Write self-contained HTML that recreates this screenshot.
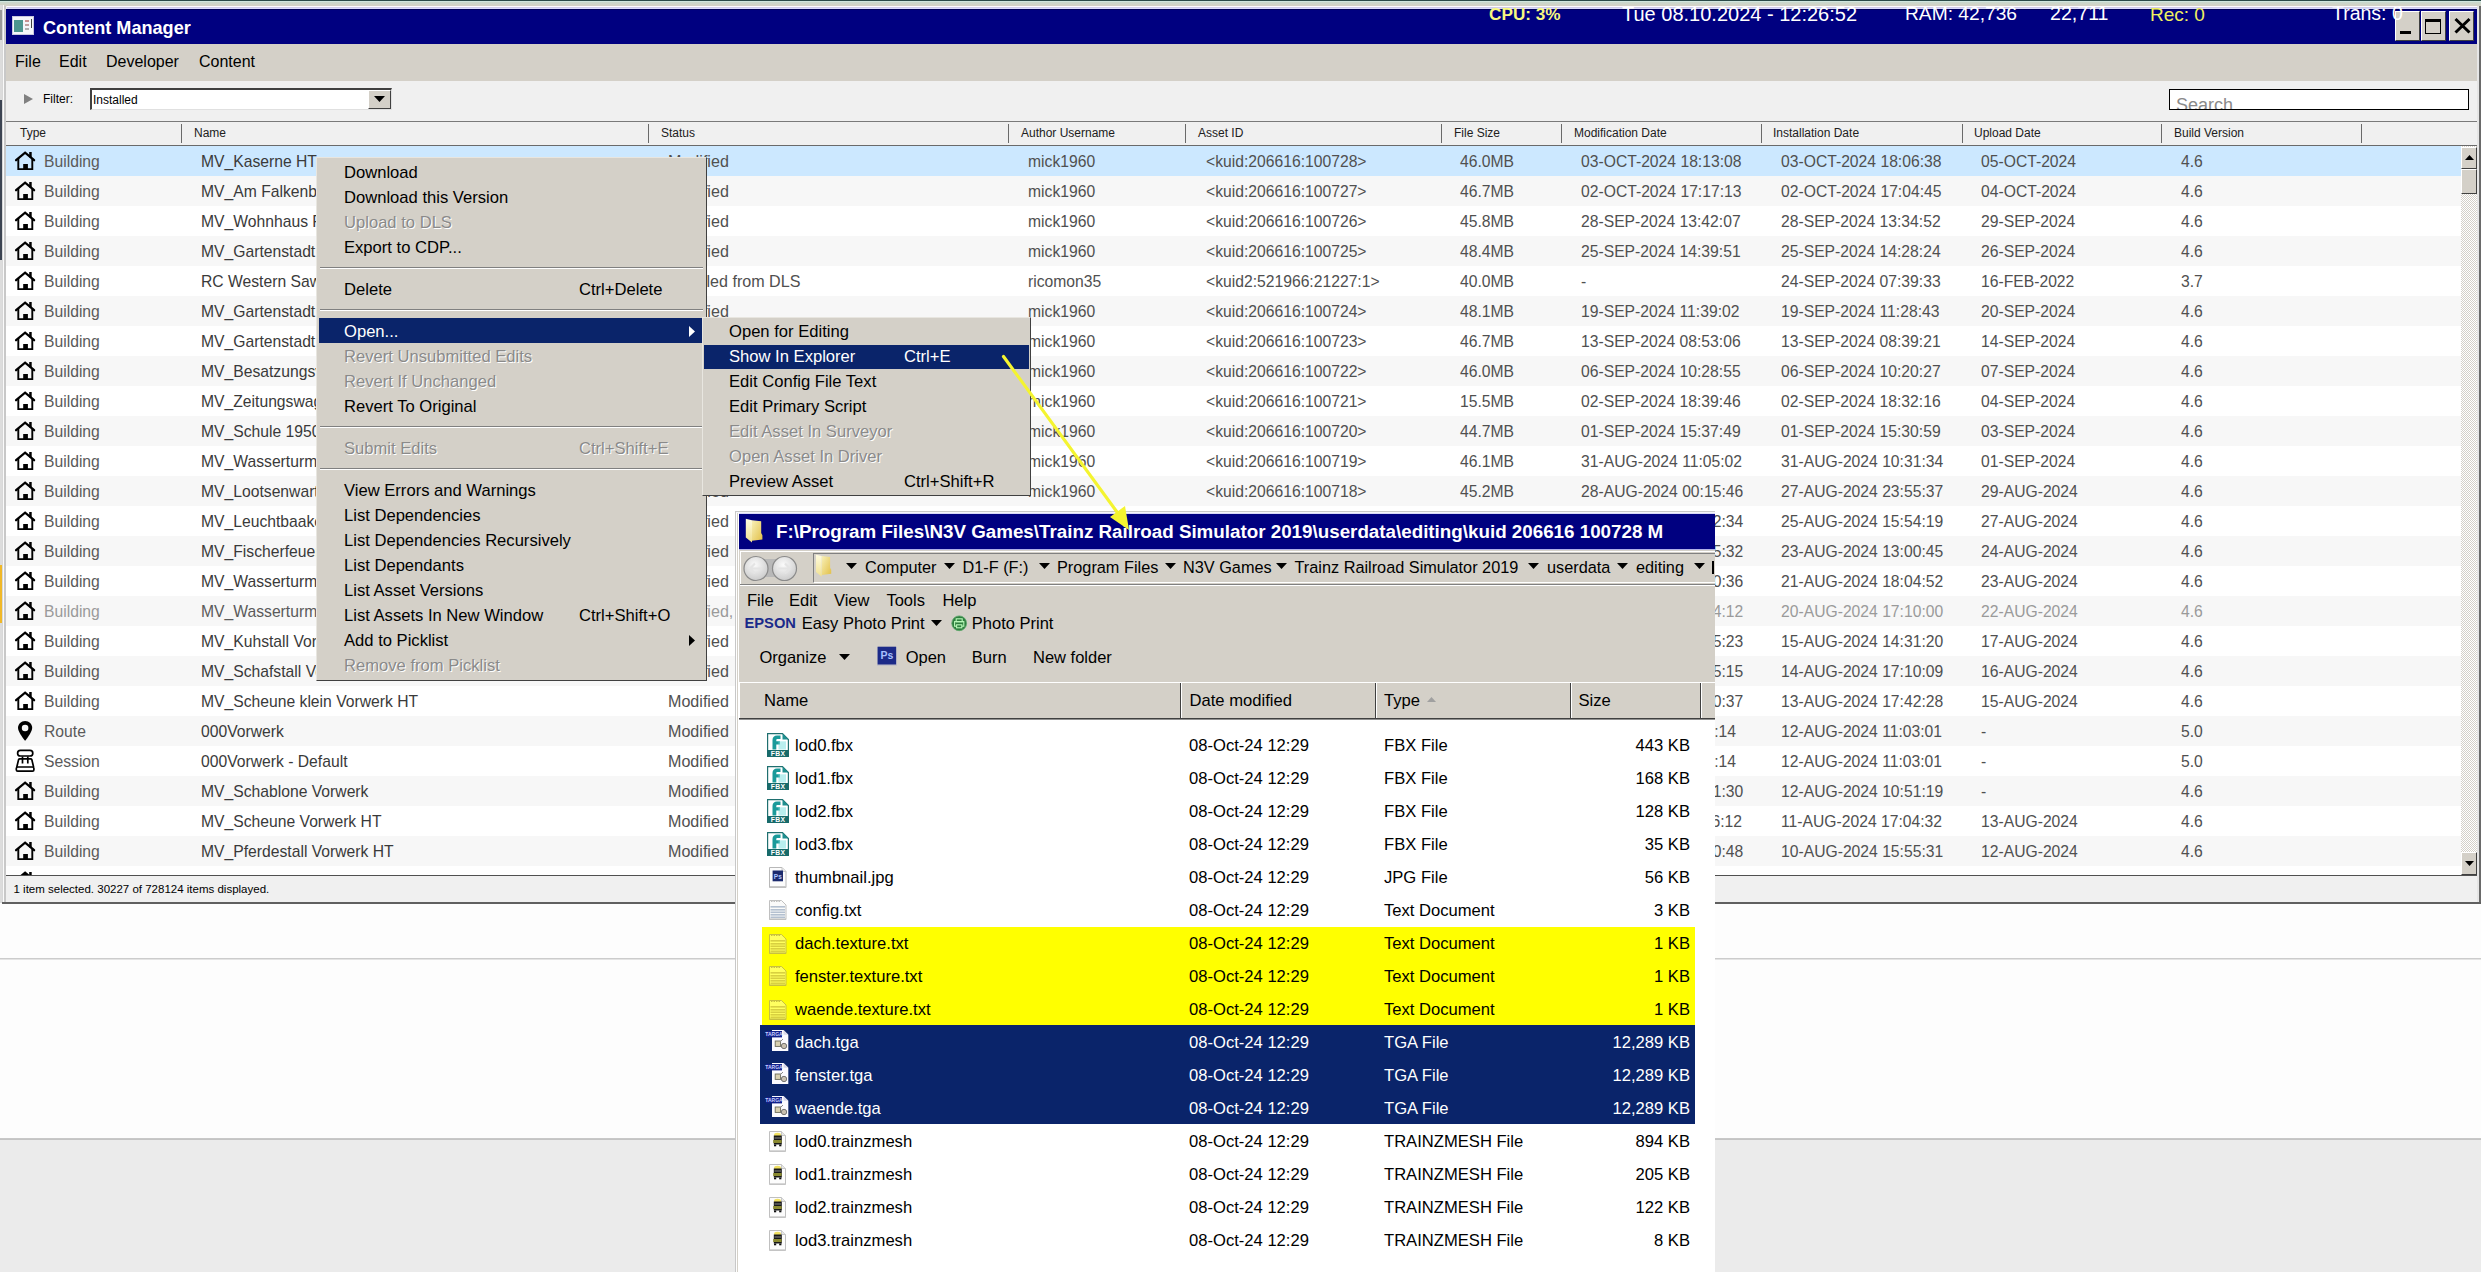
<!DOCTYPE html>
<html><head><meta charset="utf-8"><title>Content Manager</title>
<style>
html,body{margin:0;padding:0;}
body{width:2481px;height:1272px;position:relative;overflow:hidden;background:#fdfdfd;font-family:"Liberation Sans",sans-serif;}
.b{position:absolute;}
.t{position:absolute;white-space:nowrap;}
svg.b{overflow:visible;}
</style></head><body>

<div class="b" style="left:0px;top:0px;width:2481px;height:1px;background:#2a4a48;"></div>
<div class="b" style="left:0px;top:1px;width:2481px;height:1px;background:#d0e6de;"></div>
<div class="b" style="left:0px;top:2px;width:2481px;height:4px;background:linear-gradient(#c8d8cc,#d4d0c4);"></div>
<div class="b" style="left:0px;top:6px;width:2481px;height:1px;background:#fdfbff;"></div>
<div class="b" style="left:6px;top:7px;width:2471px;height:1px;background:#d0cce8;"></div>
<div class="b" style="left:6px;top:8px;width:2471px;height:1px;background:#d8d8ff;"></div>
<div class="b" style="left:0px;top:5px;width:2px;height:898px;background:#dcdcdc;"></div>
<div class="b" style="left:0px;top:10px;width:2px;height:30px;background:#9a9a9a;"></div>
<div class="b" style="left:0px;top:100px;width:2px;height:160px;background:#3c4452;"></div>
<div class="b" style="left:0px;top:565px;width:2px;height:58px;background:#f0b828;"></div>
<div class="b" style="left:2px;top:5px;width:1px;height:898px;background:#d8d8d8;"></div>
<div class="b" style="left:3px;top:5px;width:1px;height:898px;background:#fafafa;"></div>
<div class="b" style="left:4px;top:6px;width:1.5px;height:897px;background:#c8c8c8;"></div>
<div class="b" style="left:5.5px;top:6px;width:0.5px;height:897px;background:#f0f0f0;"></div>
<div class="b" style="left:2477px;top:6px;width:2px;height:897px;background:#e6e6e6;"></div>
<div class="b" style="left:2479px;top:6px;width:2px;height:897px;background:#6a6a6a;"></div>
<div class="b" style="left:6px;top:9px;width:2471px;height:35px;background:#000080;"></div>
<div class="b" style="left:6px;top:9px;width:2471px;height:1px;background:#000058;"></div>
<div class="b" style="left:12px;top:16px;width:22px;height:19px;background:#f4f6fa;border:1px solid #c8c8e0;box-sizing:border-box;"></div>
<div class="b" style="left:14px;top:20px;width:9px;height:12px;background:#4c9690;"></div>
<div class="b" style="left:25px;top:20px;width:4px;height:2px;background:#c89090;"></div>
<div class="b" style="left:25px;top:24px;width:4px;height:2px;background:#c0a0a0;"></div>
<div class="b" style="left:25px;top:28px;width:4px;height:2px;background:#b0b0b0;"></div>
<div class="b" style="left:31px;top:19px;width:1px;height:9px;background:#404040;"></div>
<div class="t" style="left:43.00px;top:18.98px;font-size:18.1px;line-height:18.1px;color:#ffffff;font-weight:700;">Content Manager</div>
<div class="b" style="left:1400px;top:7px;width:1076px;height:30px;overflow:hidden;z-index:5;">
<div class="t" style="left:89px;top:-0.96px;font-size:17.2px;line-height:17.2px;color:#f8f880;font-weight:700;">CPU: 3%</div>
<div class="t" style="left:222px;top:-3.33px;font-size:20px;line-height:20px;color:#ffffff;">Tue 08.10.2024 - 12:26:52</div>
<div class="t" style="left:505px;top:-2.65px;font-size:19.2px;line-height:19.2px;color:#ffffff;">RAM: 42,736</div>
<div class="t" style="left:650px;top:-2.99px;font-size:19.6px;line-height:19.6px;color:#ffffff;">22,711</div>
<div class="t" style="left:750px;top:-2.48px;font-size:19.0px;line-height:19.0px;color:#f0f060;">Rec: 0</div>
<div class="t" style="left:932px;top:-2.91px;font-size:19.5px;line-height:19.5px;color:#ffffff;">Trans: 0</div>
</div>
<div class="b" style="left:2395px;top:11px;width:25px;height:30px;background:#d4d0c8;border-top:1px solid #fff;border-left:1px solid #fff;border-right:1px solid #404040;border-bottom:1px solid #404040;box-sizing:border-box;"></div>
<div class="b" style="left:2421px;top:11px;width:25px;height:30px;background:#d4d0c8;border-top:1px solid #fff;border-left:1px solid #fff;border-right:1px solid #404040;border-bottom:1px solid #404040;box-sizing:border-box;"></div>
<div class="b" style="left:2449px;top:11px;width:25px;height:30px;background:#d4d0c8;border-top:1px solid #fff;border-left:1px solid #fff;border-right:1px solid #404040;border-bottom:1px solid #404040;box-sizing:border-box;"></div>
<div class="b" style="left:2400px;top:31px;width:11px;height:3px;background:#000;"></div>
<div class="b" style="left:2425px;top:19px;width:16px;height:15px;background:transparent;border:1.3px solid #000;border-top-width:3px;box-sizing:border-box;"></div>
<svg class="b" style="left:2453px;top:17px" width="18" height="17" viewBox="0 0 18 17"><path d="M2.5 2L16.5 15.5M16.5 2L2.5 15.5" stroke="#000" stroke-width="3"/></svg>
<div class="b" style="left:6px;top:44px;width:2471px;height:37px;background:#d4d0c8;"></div>
<div class="t" style="left:15.00px;top:54.46px;font-size:16px;line-height:16px;color:#000;">File</div>
<div class="t" style="left:59.00px;top:54.46px;font-size:16px;line-height:16px;color:#000;">Edit</div>
<div class="t" style="left:106.00px;top:54.46px;font-size:16px;line-height:16px;color:#000;">Developer</div>
<div class="t" style="left:199.00px;top:54.46px;font-size:16px;line-height:16px;color:#000;">Content</div>
<div class="b" style="left:6px;top:81px;width:2471px;height:40px;background:#f0f0f0;"></div>
<svg class="b" style="left:24px;top:94px" width="9" height="10" viewBox="0 0 9 10"><path d="M0 0L9 5L0 10Z" fill="#808080"/></svg>
<div class="t" style="left:43.00px;top:93.34px;font-size:12px;line-height:12px;color:#000;">Filter:</div>
<div class="b" style="left:90px;top:88px;width:302px;height:22px;background:#fff;border-top:2px solid #404040;border-left:2px solid #404040;border-bottom:1px solid #e0e0e0;border-right:1px solid #e0e0e0;box-sizing:border-box;"></div>
<div class="t" style="left:93.00px;top:93.84px;font-size:12px;line-height:12px;color:#000;">Installed</div>
<div class="b" style="left:368px;top:90px;width:23px;height:19px;background:#d4d0c8;border-top:1px solid #fff;border-left:1px solid #fff;border-right:1px solid #404040;border-bottom:1px solid #404040;box-sizing:border-box;"></div>
<svg class="b" style="left:374px;top:96px" width="11" height="6" viewBox="0 0 11 6"><path d="M0 0H11L5.5 6Z" fill="#000"/></svg>
<div class="b" style="left:2169px;top:89px;width:300px;height:21px;background:#fff;border:1px solid #000;box-sizing:border-box;"></div>
<div class="b" style="left:2170px;top:90px;width:298px;height:19px;overflow:hidden;"><div class="t" style="left:6px;top:6.4px;font-size:18px;line-height:18px;color:#8a8a8a;">Search</div></div>
<div class="b" style="left:6px;top:121px;width:2471px;height:1px;background:#7a7a7a;"></div>
<div class="b" style="left:6px;top:122px;width:2471px;height:23px;background:#f0f0f0;"></div>
<div class="b" style="left:6px;top:145px;width:2471px;height:1px;background:#6a6a6a;"></div>
<div class="b" style="left:181px;top:124px;width:1px;height:19px;background:#6a6a6a;"></div>
<div class="b" style="left:648px;top:124px;width:1px;height:19px;background:#6a6a6a;"></div>
<div class="b" style="left:1008px;top:124px;width:1px;height:19px;background:#6a6a6a;"></div>
<div class="b" style="left:1185px;top:124px;width:1px;height:19px;background:#6a6a6a;"></div>
<div class="b" style="left:1441px;top:124px;width:1px;height:19px;background:#6a6a6a;"></div>
<div class="b" style="left:1561px;top:124px;width:1px;height:19px;background:#6a6a6a;"></div>
<div class="b" style="left:1761px;top:124px;width:1px;height:19px;background:#6a6a6a;"></div>
<div class="b" style="left:1962px;top:124px;width:1px;height:19px;background:#6a6a6a;"></div>
<div class="b" style="left:2161px;top:124px;width:1px;height:19px;background:#6a6a6a;"></div>
<div class="b" style="left:2361px;top:124px;width:1px;height:19px;background:#6a6a6a;"></div>
<div class="t" style="left:20.00px;top:127.04px;font-size:12.0px;line-height:12.0px;color:#202020;">Type</div>
<div class="t" style="left:194.00px;top:127.04px;font-size:12.0px;line-height:12.0px;color:#202020;">Name</div>
<div class="t" style="left:661.00px;top:127.04px;font-size:12.0px;line-height:12.0px;color:#202020;">Status</div>
<div class="t" style="left:1021.00px;top:127.04px;font-size:12.0px;line-height:12.0px;color:#202020;">Author Username</div>
<div class="t" style="left:1198.00px;top:127.04px;font-size:12.0px;line-height:12.0px;color:#202020;">Asset ID</div>
<div class="t" style="left:1454.00px;top:127.04px;font-size:12.0px;line-height:12.0px;color:#202020;">File Size</div>
<div class="t" style="left:1574.00px;top:127.04px;font-size:12.0px;line-height:12.0px;color:#202020;">Modification Date</div>
<div class="t" style="left:1773.00px;top:127.04px;font-size:12.0px;line-height:12.0px;color:#202020;">Installation Date</div>
<div class="t" style="left:1974.00px;top:127.04px;font-size:12.0px;line-height:12.0px;color:#202020;">Upload Date</div>
<div class="t" style="left:2174.00px;top:127.04px;font-size:12.0px;line-height:12.0px;color:#202020;">Build Version</div>
<div class="b" style="left:6px;top:875px;width:2471px;height:1px;background:#505050;"></div>
<div class="b" style="left:6px;top:876px;width:2471px;height:26px;background:#f0f0f0;"></div>
<div class="b" style="left:2px;top:902px;width:2479px;height:2px;background:#606060;"></div>
<div class="t" style="left:13.50px;top:883.77px;font-size:11.5px;line-height:11.5px;color:#000;">1 item selected. 30227 of 728124 items displayed.</div>
<div class="b" style="left:0px;top:958px;width:2481px;height:1px;background:#cccccc;"></div>
<div class="b" style="left:0px;top:959px;width:2481px;height:1px;background:#e4e4e4;"></div>
<div class="b" style="left:0px;top:1138px;width:2481px;height:1px;background:#c8c8c8;"></div>
<div class="b" style="left:0px;top:1139px;width:2481px;height:1px;background:#c4c4c4;"></div>
<div class="b" style="left:0px;top:1140px;width:2481px;height:132px;background:#ebebeb;"></div>
<div class="b" style="left:6px;top:146px;width:2455px;height:729px;overflow:hidden;">
<div class="b" style="left:0;top:0px;width:2455px;height:30px;background:#cce8ff;"></div>
<svg class="b" style="left:9px;top:0px" width="21" height="26" viewBox="0 0 21 26"><path d="M1.1 14.2L10.1 6.7L19.1 14.2" fill="none" stroke="#000" stroke-width="2.3" stroke-linecap="round" stroke-linejoin="miter"/><path d="M3.3 12.3V23.1H17.3V12.3" fill="none" stroke="#000" stroke-width="1.9"/><rect x="8.2" y="18" width="4.7" height="5.5" fill="#000"/><rect x="14.2" y="6" width="2.5" height="5.5" fill="#000"/></svg>
<div class="t" style="left:38.00px;top:7.51px;font-size:15.7px;line-height:15.7px;color:#5a5a5a;">Building</div>
<div class="t" style="left:195.00px;top:7.51px;font-size:15.7px;line-height:15.7px;color:#3a3a3a;">MV_Kaserne HT</div>
<div class="t" style="left:662.00px;top:7.17px;font-size:16.1px;line-height:16.1px;color:#505050;">Modified</div>
<div class="t" style="left:1022.00px;top:7.51px;font-size:15.7px;line-height:15.7px;color:#505050;">mick1960</div>
<div class="t" style="left:1200.00px;top:7.51px;font-size:15.7px;line-height:15.7px;color:#505050;">&lt;kuid:206616:100728&gt;</div>
<div class="t" style="left:1454.00px;top:7.51px;font-size:15.7px;line-height:15.7px;color:#505050;">46.0MB</div>
<div class="t" style="left:1575.00px;top:7.51px;font-size:15.7px;line-height:15.7px;color:#505050;">03-OCT-2024 18:13:08</div>
<div class="t" style="left:1775.00px;top:7.51px;font-size:15.7px;line-height:15.7px;color:#505050;">03-OCT-2024 18:06:38</div>
<div class="t" style="left:1975.00px;top:7.51px;font-size:15.7px;line-height:15.7px;color:#505050;">05-OCT-2024</div>
<div class="t" style="left:2175.00px;top:7.51px;font-size:15.7px;line-height:15.7px;color:#505050;">4.6</div>
<div class="b" style="left:0;top:30px;width:2455px;height:30px;background:#f7f7f7;"></div>
<svg class="b" style="left:9px;top:30px" width="21" height="26" viewBox="0 0 21 26"><path d="M1.1 14.2L10.1 6.7L19.1 14.2" fill="none" stroke="#000" stroke-width="2.3" stroke-linecap="round" stroke-linejoin="miter"/><path d="M3.3 12.3V23.1H17.3V12.3" fill="none" stroke="#000" stroke-width="1.9"/><rect x="8.2" y="18" width="4.7" height="5.5" fill="#000"/><rect x="14.2" y="6" width="2.5" height="5.5" fill="#000"/></svg>
<div class="t" style="left:38.00px;top:37.51px;font-size:15.7px;line-height:15.7px;color:#5a5a5a;">Building</div>
<div class="t" style="left:195.00px;top:37.51px;font-size:15.7px;line-height:15.7px;color:#3a3a3a;">MV_Am Falkenberg HT</div>
<div class="t" style="left:662.00px;top:37.17px;font-size:16.1px;line-height:16.1px;color:#505050;">Modified</div>
<div class="t" style="left:1022.00px;top:37.51px;font-size:15.7px;line-height:15.7px;color:#505050;">mick1960</div>
<div class="t" style="left:1200.00px;top:37.51px;font-size:15.7px;line-height:15.7px;color:#505050;">&lt;kuid:206616:100727&gt;</div>
<div class="t" style="left:1454.00px;top:37.51px;font-size:15.7px;line-height:15.7px;color:#505050;">46.7MB</div>
<div class="t" style="left:1575.00px;top:37.51px;font-size:15.7px;line-height:15.7px;color:#505050;">02-OCT-2024 17:17:13</div>
<div class="t" style="left:1775.00px;top:37.51px;font-size:15.7px;line-height:15.7px;color:#505050;">02-OCT-2024 17:04:45</div>
<div class="t" style="left:1975.00px;top:37.51px;font-size:15.7px;line-height:15.7px;color:#505050;">04-OCT-2024</div>
<div class="t" style="left:2175.00px;top:37.51px;font-size:15.7px;line-height:15.7px;color:#505050;">4.6</div>
<div class="b" style="left:0;top:60px;width:2455px;height:30px;background:#ffffff;"></div>
<svg class="b" style="left:9px;top:60px" width="21" height="26" viewBox="0 0 21 26"><path d="M1.1 14.2L10.1 6.7L19.1 14.2" fill="none" stroke="#000" stroke-width="2.3" stroke-linecap="round" stroke-linejoin="miter"/><path d="M3.3 12.3V23.1H17.3V12.3" fill="none" stroke="#000" stroke-width="1.9"/><rect x="8.2" y="18" width="4.7" height="5.5" fill="#000"/><rect x="14.2" y="6" width="2.5" height="5.5" fill="#000"/></svg>
<div class="t" style="left:38.00px;top:67.51px;font-size:15.7px;line-height:15.7px;color:#5a5a5a;">Building</div>
<div class="t" style="left:195.00px;top:67.51px;font-size:15.7px;line-height:15.7px;color:#3a3a3a;">MV_Wohnhaus Falkenberg</div>
<div class="t" style="left:662.00px;top:67.17px;font-size:16.1px;line-height:16.1px;color:#505050;">Modified</div>
<div class="t" style="left:1022.00px;top:67.51px;font-size:15.7px;line-height:15.7px;color:#505050;">mick1960</div>
<div class="t" style="left:1200.00px;top:67.51px;font-size:15.7px;line-height:15.7px;color:#505050;">&lt;kuid:206616:100726&gt;</div>
<div class="t" style="left:1454.00px;top:67.51px;font-size:15.7px;line-height:15.7px;color:#505050;">45.8MB</div>
<div class="t" style="left:1575.00px;top:67.51px;font-size:15.7px;line-height:15.7px;color:#505050;">28-SEP-2024 13:42:07</div>
<div class="t" style="left:1775.00px;top:67.51px;font-size:15.7px;line-height:15.7px;color:#505050;">28-SEP-2024 13:34:52</div>
<div class="t" style="left:1975.00px;top:67.51px;font-size:15.7px;line-height:15.7px;color:#505050;">29-SEP-2024</div>
<div class="t" style="left:2175.00px;top:67.51px;font-size:15.7px;line-height:15.7px;color:#505050;">4.6</div>
<div class="b" style="left:0;top:90px;width:2455px;height:30px;background:#f7f7f7;"></div>
<svg class="b" style="left:9px;top:90px" width="21" height="26" viewBox="0 0 21 26"><path d="M1.1 14.2L10.1 6.7L19.1 14.2" fill="none" stroke="#000" stroke-width="2.3" stroke-linecap="round" stroke-linejoin="miter"/><path d="M3.3 12.3V23.1H17.3V12.3" fill="none" stroke="#000" stroke-width="1.9"/><rect x="8.2" y="18" width="4.7" height="5.5" fill="#000"/><rect x="14.2" y="6" width="2.5" height="5.5" fill="#000"/></svg>
<div class="t" style="left:38.00px;top:97.51px;font-size:15.7px;line-height:15.7px;color:#5a5a5a;">Building</div>
<div class="t" style="left:195.00px;top:97.51px;font-size:15.7px;line-height:15.7px;color:#3a3a3a;">MV_Gartenstadt 1</div>
<div class="t" style="left:662.00px;top:97.17px;font-size:16.1px;line-height:16.1px;color:#505050;">Modified</div>
<div class="t" style="left:1022.00px;top:97.51px;font-size:15.7px;line-height:15.7px;color:#505050;">mick1960</div>
<div class="t" style="left:1200.00px;top:97.51px;font-size:15.7px;line-height:15.7px;color:#505050;">&lt;kuid:206616:100725&gt;</div>
<div class="t" style="left:1454.00px;top:97.51px;font-size:15.7px;line-height:15.7px;color:#505050;">48.4MB</div>
<div class="t" style="left:1575.00px;top:97.51px;font-size:15.7px;line-height:15.7px;color:#505050;">25-SEP-2024 14:39:51</div>
<div class="t" style="left:1775.00px;top:97.51px;font-size:15.7px;line-height:15.7px;color:#505050;">25-SEP-2024 14:28:24</div>
<div class="t" style="left:1975.00px;top:97.51px;font-size:15.7px;line-height:15.7px;color:#505050;">26-SEP-2024</div>
<div class="t" style="left:2175.00px;top:97.51px;font-size:15.7px;line-height:15.7px;color:#505050;">4.6</div>
<div class="b" style="left:0;top:120px;width:2455px;height:30px;background:#ffffff;"></div>
<svg class="b" style="left:9px;top:120px" width="21" height="26" viewBox="0 0 21 26"><path d="M1.1 14.2L10.1 6.7L19.1 14.2" fill="none" stroke="#000" stroke-width="2.3" stroke-linecap="round" stroke-linejoin="miter"/><path d="M3.3 12.3V23.1H17.3V12.3" fill="none" stroke="#000" stroke-width="1.9"/><rect x="8.2" y="18" width="4.7" height="5.5" fill="#000"/><rect x="14.2" y="6" width="2.5" height="5.5" fill="#000"/></svg>
<div class="t" style="left:38.00px;top:127.51px;font-size:15.7px;line-height:15.7px;color:#5a5a5a;">Building</div>
<div class="t" style="left:195.00px;top:127.51px;font-size:15.7px;line-height:15.7px;color:#3a3a3a;">RC Western Sawmill</div>
<div class="t" style="left:662.00px;top:127.17px;font-size:16.1px;line-height:16.1px;color:#505050;">Installed from DLS</div>
<div class="t" style="left:1022.00px;top:127.51px;font-size:15.7px;line-height:15.7px;color:#505050;">ricomon35</div>
<div class="t" style="left:1200.00px;top:127.51px;font-size:15.7px;line-height:15.7px;color:#505050;">&lt;kuid2:521966:21227:1&gt;</div>
<div class="t" style="left:1454.00px;top:127.51px;font-size:15.7px;line-height:15.7px;color:#505050;">40.0MB</div>
<div class="t" style="left:1575.00px;top:127.51px;font-size:15.7px;line-height:15.7px;color:#505050;">-</div>
<div class="t" style="left:1775.00px;top:127.51px;font-size:15.7px;line-height:15.7px;color:#505050;">24-SEP-2024 07:39:33</div>
<div class="t" style="left:1975.00px;top:127.51px;font-size:15.7px;line-height:15.7px;color:#505050;">16-FEB-2022</div>
<div class="t" style="left:2175.00px;top:127.51px;font-size:15.7px;line-height:15.7px;color:#505050;">3.7</div>
<div class="b" style="left:0;top:150px;width:2455px;height:30px;background:#f7f7f7;"></div>
<svg class="b" style="left:9px;top:150px" width="21" height="26" viewBox="0 0 21 26"><path d="M1.1 14.2L10.1 6.7L19.1 14.2" fill="none" stroke="#000" stroke-width="2.3" stroke-linecap="round" stroke-linejoin="miter"/><path d="M3.3 12.3V23.1H17.3V12.3" fill="none" stroke="#000" stroke-width="1.9"/><rect x="8.2" y="18" width="4.7" height="5.5" fill="#000"/><rect x="14.2" y="6" width="2.5" height="5.5" fill="#000"/></svg>
<div class="t" style="left:38.00px;top:157.51px;font-size:15.7px;line-height:15.7px;color:#5a5a5a;">Building</div>
<div class="t" style="left:195.00px;top:157.51px;font-size:15.7px;line-height:15.7px;color:#3a3a3a;">MV_Gartenstadt 2</div>
<div class="t" style="left:662.00px;top:157.17px;font-size:16.1px;line-height:16.1px;color:#505050;">Modified</div>
<div class="t" style="left:1022.00px;top:157.51px;font-size:15.7px;line-height:15.7px;color:#505050;">mick1960</div>
<div class="t" style="left:1200.00px;top:157.51px;font-size:15.7px;line-height:15.7px;color:#505050;">&lt;kuid:206616:100724&gt;</div>
<div class="t" style="left:1454.00px;top:157.51px;font-size:15.7px;line-height:15.7px;color:#505050;">48.1MB</div>
<div class="t" style="left:1575.00px;top:157.51px;font-size:15.7px;line-height:15.7px;color:#505050;">19-SEP-2024 11:39:02</div>
<div class="t" style="left:1775.00px;top:157.51px;font-size:15.7px;line-height:15.7px;color:#505050;">19-SEP-2024 11:28:43</div>
<div class="t" style="left:1975.00px;top:157.51px;font-size:15.7px;line-height:15.7px;color:#505050;">20-SEP-2024</div>
<div class="t" style="left:2175.00px;top:157.51px;font-size:15.7px;line-height:15.7px;color:#505050;">4.6</div>
<div class="b" style="left:0;top:180px;width:2455px;height:30px;background:#ffffff;"></div>
<svg class="b" style="left:9px;top:180px" width="21" height="26" viewBox="0 0 21 26"><path d="M1.1 14.2L10.1 6.7L19.1 14.2" fill="none" stroke="#000" stroke-width="2.3" stroke-linecap="round" stroke-linejoin="miter"/><path d="M3.3 12.3V23.1H17.3V12.3" fill="none" stroke="#000" stroke-width="1.9"/><rect x="8.2" y="18" width="4.7" height="5.5" fill="#000"/><rect x="14.2" y="6" width="2.5" height="5.5" fill="#000"/></svg>
<div class="t" style="left:38.00px;top:187.51px;font-size:15.7px;line-height:15.7px;color:#5a5a5a;">Building</div>
<div class="t" style="left:195.00px;top:187.51px;font-size:15.7px;line-height:15.7px;color:#3a3a3a;">MV_Gartenstadt 3</div>
<div class="t" style="left:662.00px;top:187.17px;font-size:16.1px;line-height:16.1px;color:#505050;">Modified</div>
<div class="t" style="left:1022.00px;top:187.51px;font-size:15.7px;line-height:15.7px;color:#505050;">mick1960</div>
<div class="t" style="left:1200.00px;top:187.51px;font-size:15.7px;line-height:15.7px;color:#505050;">&lt;kuid:206616:100723&gt;</div>
<div class="t" style="left:1454.00px;top:187.51px;font-size:15.7px;line-height:15.7px;color:#505050;">46.7MB</div>
<div class="t" style="left:1575.00px;top:187.51px;font-size:15.7px;line-height:15.7px;color:#505050;">13-SEP-2024 08:53:06</div>
<div class="t" style="left:1775.00px;top:187.51px;font-size:15.7px;line-height:15.7px;color:#505050;">13-SEP-2024 08:39:21</div>
<div class="t" style="left:1975.00px;top:187.51px;font-size:15.7px;line-height:15.7px;color:#505050;">14-SEP-2024</div>
<div class="t" style="left:2175.00px;top:187.51px;font-size:15.7px;line-height:15.7px;color:#505050;">4.6</div>
<div class="b" style="left:0;top:210px;width:2455px;height:30px;background:#f7f7f7;"></div>
<svg class="b" style="left:9px;top:210px" width="21" height="26" viewBox="0 0 21 26"><path d="M1.1 14.2L10.1 6.7L19.1 14.2" fill="none" stroke="#000" stroke-width="2.3" stroke-linecap="round" stroke-linejoin="miter"/><path d="M3.3 12.3V23.1H17.3V12.3" fill="none" stroke="#000" stroke-width="1.9"/><rect x="8.2" y="18" width="4.7" height="5.5" fill="#000"/><rect x="14.2" y="6" width="2.5" height="5.5" fill="#000"/></svg>
<div class="t" style="left:38.00px;top:217.51px;font-size:15.7px;line-height:15.7px;color:#5a5a5a;">Building</div>
<div class="t" style="left:195.00px;top:217.51px;font-size:15.7px;line-height:15.7px;color:#3a3a3a;">MV_Besatzungsvilla</div>
<div class="t" style="left:662.00px;top:217.17px;font-size:16.1px;line-height:16.1px;color:#505050;">Modified</div>
<div class="t" style="left:1022.00px;top:217.51px;font-size:15.7px;line-height:15.7px;color:#505050;">mick1960</div>
<div class="t" style="left:1200.00px;top:217.51px;font-size:15.7px;line-height:15.7px;color:#505050;">&lt;kuid:206616:100722&gt;</div>
<div class="t" style="left:1454.00px;top:217.51px;font-size:15.7px;line-height:15.7px;color:#505050;">46.0MB</div>
<div class="t" style="left:1575.00px;top:217.51px;font-size:15.7px;line-height:15.7px;color:#505050;">06-SEP-2024 10:28:55</div>
<div class="t" style="left:1775.00px;top:217.51px;font-size:15.7px;line-height:15.7px;color:#505050;">06-SEP-2024 10:20:27</div>
<div class="t" style="left:1975.00px;top:217.51px;font-size:15.7px;line-height:15.7px;color:#505050;">07-SEP-2024</div>
<div class="t" style="left:2175.00px;top:217.51px;font-size:15.7px;line-height:15.7px;color:#505050;">4.6</div>
<div class="b" style="left:0;top:240px;width:2455px;height:30px;background:#ffffff;"></div>
<svg class="b" style="left:9px;top:240px" width="21" height="26" viewBox="0 0 21 26"><path d="M1.1 14.2L10.1 6.7L19.1 14.2" fill="none" stroke="#000" stroke-width="2.3" stroke-linecap="round" stroke-linejoin="miter"/><path d="M3.3 12.3V23.1H17.3V12.3" fill="none" stroke="#000" stroke-width="1.9"/><rect x="8.2" y="18" width="4.7" height="5.5" fill="#000"/><rect x="14.2" y="6" width="2.5" height="5.5" fill="#000"/></svg>
<div class="t" style="left:38.00px;top:247.51px;font-size:15.7px;line-height:15.7px;color:#5a5a5a;">Building</div>
<div class="t" style="left:195.00px;top:247.51px;font-size:15.7px;line-height:15.7px;color:#3a3a3a;">MV_Zeitungswagen</div>
<div class="t" style="left:662.00px;top:247.17px;font-size:16.1px;line-height:16.1px;color:#505050;">Modified</div>
<div class="t" style="left:1022.00px;top:247.51px;font-size:15.7px;line-height:15.7px;color:#505050;">mick1960</div>
<div class="t" style="left:1200.00px;top:247.51px;font-size:15.7px;line-height:15.7px;color:#505050;">&lt;kuid:206616:100721&gt;</div>
<div class="t" style="left:1454.00px;top:247.51px;font-size:15.7px;line-height:15.7px;color:#505050;">15.5MB</div>
<div class="t" style="left:1575.00px;top:247.51px;font-size:15.7px;line-height:15.7px;color:#505050;">02-SEP-2024 18:39:46</div>
<div class="t" style="left:1775.00px;top:247.51px;font-size:15.7px;line-height:15.7px;color:#505050;">02-SEP-2024 18:32:16</div>
<div class="t" style="left:1975.00px;top:247.51px;font-size:15.7px;line-height:15.7px;color:#505050;">04-SEP-2024</div>
<div class="t" style="left:2175.00px;top:247.51px;font-size:15.7px;line-height:15.7px;color:#505050;">4.6</div>
<div class="b" style="left:0;top:270px;width:2455px;height:30px;background:#f7f7f7;"></div>
<svg class="b" style="left:9px;top:270px" width="21" height="26" viewBox="0 0 21 26"><path d="M1.1 14.2L10.1 6.7L19.1 14.2" fill="none" stroke="#000" stroke-width="2.3" stroke-linecap="round" stroke-linejoin="miter"/><path d="M3.3 12.3V23.1H17.3V12.3" fill="none" stroke="#000" stroke-width="1.9"/><rect x="8.2" y="18" width="4.7" height="5.5" fill="#000"/><rect x="14.2" y="6" width="2.5" height="5.5" fill="#000"/></svg>
<div class="t" style="left:38.00px;top:277.51px;font-size:15.7px;line-height:15.7px;color:#5a5a5a;">Building</div>
<div class="t" style="left:195.00px;top:277.51px;font-size:15.7px;line-height:15.7px;color:#3a3a3a;">MV_Schule 1950</div>
<div class="t" style="left:662.00px;top:277.17px;font-size:16.1px;line-height:16.1px;color:#505050;">Modified</div>
<div class="t" style="left:1022.00px;top:277.51px;font-size:15.7px;line-height:15.7px;color:#505050;">mick1960</div>
<div class="t" style="left:1200.00px;top:277.51px;font-size:15.7px;line-height:15.7px;color:#505050;">&lt;kuid:206616:100720&gt;</div>
<div class="t" style="left:1454.00px;top:277.51px;font-size:15.7px;line-height:15.7px;color:#505050;">44.7MB</div>
<div class="t" style="left:1575.00px;top:277.51px;font-size:15.7px;line-height:15.7px;color:#505050;">01-SEP-2024 15:37:49</div>
<div class="t" style="left:1775.00px;top:277.51px;font-size:15.7px;line-height:15.7px;color:#505050;">01-SEP-2024 15:30:59</div>
<div class="t" style="left:1975.00px;top:277.51px;font-size:15.7px;line-height:15.7px;color:#505050;">03-SEP-2024</div>
<div class="t" style="left:2175.00px;top:277.51px;font-size:15.7px;line-height:15.7px;color:#505050;">4.6</div>
<div class="b" style="left:0;top:300px;width:2455px;height:30px;background:#ffffff;"></div>
<svg class="b" style="left:9px;top:300px" width="21" height="26" viewBox="0 0 21 26"><path d="M1.1 14.2L10.1 6.7L19.1 14.2" fill="none" stroke="#000" stroke-width="2.3" stroke-linecap="round" stroke-linejoin="miter"/><path d="M3.3 12.3V23.1H17.3V12.3" fill="none" stroke="#000" stroke-width="1.9"/><rect x="8.2" y="18" width="4.7" height="5.5" fill="#000"/><rect x="14.2" y="6" width="2.5" height="5.5" fill="#000"/></svg>
<div class="t" style="left:38.00px;top:307.51px;font-size:15.7px;line-height:15.7px;color:#5a5a5a;">Building</div>
<div class="t" style="left:195.00px;top:307.51px;font-size:15.7px;line-height:15.7px;color:#3a3a3a;">MV_Wasserturm 1</div>
<div class="t" style="left:662.00px;top:307.17px;font-size:16.1px;line-height:16.1px;color:#505050;">Modified</div>
<div class="t" style="left:1022.00px;top:307.51px;font-size:15.7px;line-height:15.7px;color:#505050;">mick1960</div>
<div class="t" style="left:1200.00px;top:307.51px;font-size:15.7px;line-height:15.7px;color:#505050;">&lt;kuid:206616:100719&gt;</div>
<div class="t" style="left:1454.00px;top:307.51px;font-size:15.7px;line-height:15.7px;color:#505050;">46.1MB</div>
<div class="t" style="left:1575.00px;top:307.51px;font-size:15.7px;line-height:15.7px;color:#505050;">31-AUG-2024 11:05:02</div>
<div class="t" style="left:1775.00px;top:307.51px;font-size:15.7px;line-height:15.7px;color:#505050;">31-AUG-2024 10:31:34</div>
<div class="t" style="left:1975.00px;top:307.51px;font-size:15.7px;line-height:15.7px;color:#505050;">01-SEP-2024</div>
<div class="t" style="left:2175.00px;top:307.51px;font-size:15.7px;line-height:15.7px;color:#505050;">4.6</div>
<div class="b" style="left:0;top:330px;width:2455px;height:30px;background:#f7f7f7;"></div>
<svg class="b" style="left:9px;top:330px" width="21" height="26" viewBox="0 0 21 26"><path d="M1.1 14.2L10.1 6.7L19.1 14.2" fill="none" stroke="#000" stroke-width="2.3" stroke-linecap="round" stroke-linejoin="miter"/><path d="M3.3 12.3V23.1H17.3V12.3" fill="none" stroke="#000" stroke-width="1.9"/><rect x="8.2" y="18" width="4.7" height="5.5" fill="#000"/><rect x="14.2" y="6" width="2.5" height="5.5" fill="#000"/></svg>
<div class="t" style="left:38.00px;top:337.51px;font-size:15.7px;line-height:15.7px;color:#5a5a5a;">Building</div>
<div class="t" style="left:195.00px;top:337.51px;font-size:15.7px;line-height:15.7px;color:#3a3a3a;">MV_Lootsenwart</div>
<div class="t" style="left:662.00px;top:337.17px;font-size:16.1px;line-height:16.1px;color:#505050;">Modified</div>
<div class="t" style="left:1022.00px;top:337.51px;font-size:15.7px;line-height:15.7px;color:#505050;">mick1960</div>
<div class="t" style="left:1200.00px;top:337.51px;font-size:15.7px;line-height:15.7px;color:#505050;">&lt;kuid:206616:100718&gt;</div>
<div class="t" style="left:1454.00px;top:337.51px;font-size:15.7px;line-height:15.7px;color:#505050;">45.2MB</div>
<div class="t" style="left:1575.00px;top:337.51px;font-size:15.7px;line-height:15.7px;color:#505050;">28-AUG-2024 00:15:46</div>
<div class="t" style="left:1775.00px;top:337.51px;font-size:15.7px;line-height:15.7px;color:#505050;">27-AUG-2024 23:55:37</div>
<div class="t" style="left:1975.00px;top:337.51px;font-size:15.7px;line-height:15.7px;color:#505050;">29-AUG-2024</div>
<div class="t" style="left:2175.00px;top:337.51px;font-size:15.7px;line-height:15.7px;color:#505050;">4.6</div>
<div class="b" style="left:0;top:360px;width:2455px;height:30px;background:#ffffff;"></div>
<svg class="b" style="left:9px;top:360px" width="21" height="26" viewBox="0 0 21 26"><path d="M1.1 14.2L10.1 6.7L19.1 14.2" fill="none" stroke="#000" stroke-width="2.3" stroke-linecap="round" stroke-linejoin="miter"/><path d="M3.3 12.3V23.1H17.3V12.3" fill="none" stroke="#000" stroke-width="1.9"/><rect x="8.2" y="18" width="4.7" height="5.5" fill="#000"/><rect x="14.2" y="6" width="2.5" height="5.5" fill="#000"/></svg>
<div class="t" style="left:38.00px;top:367.51px;font-size:15.7px;line-height:15.7px;color:#5a5a5a;">Building</div>
<div class="t" style="left:195.00px;top:367.51px;font-size:15.7px;line-height:15.7px;color:#3a3a3a;">MV_Leuchtbaake</div>
<div class="t" style="left:662.00px;top:367.17px;font-size:16.1px;line-height:16.1px;color:#505050;">Modified</div>
<div class="t" style="left:1022.00px;top:367.51px;font-size:15.7px;line-height:15.7px;color:#505050;">mick1960</div>
<div class="t" style="left:1200.00px;top:367.51px;font-size:15.7px;line-height:15.7px;color:#505050;">&lt;kuid:206616:100717&gt;</div>
<div class="t" style="left:1454.00px;top:367.51px;font-size:15.7px;line-height:15.7px;color:#505050;">44.1MB</div>
<div class="t" style="left:1575.00px;top:367.51px;font-size:15.7px;line-height:15.7px;color:#505050;">25-AUG-2024 16:02:34</div>
<div class="t" style="left:1775.00px;top:367.51px;font-size:15.7px;line-height:15.7px;color:#505050;">25-AUG-2024 15:54:19</div>
<div class="t" style="left:1975.00px;top:367.51px;font-size:15.7px;line-height:15.7px;color:#505050;">27-AUG-2024</div>
<div class="t" style="left:2175.00px;top:367.51px;font-size:15.7px;line-height:15.7px;color:#505050;">4.6</div>
<div class="b" style="left:0;top:390px;width:2455px;height:30px;background:#f7f7f7;"></div>
<svg class="b" style="left:9px;top:390px" width="21" height="26" viewBox="0 0 21 26"><path d="M1.1 14.2L10.1 6.7L19.1 14.2" fill="none" stroke="#000" stroke-width="2.3" stroke-linecap="round" stroke-linejoin="miter"/><path d="M3.3 12.3V23.1H17.3V12.3" fill="none" stroke="#000" stroke-width="1.9"/><rect x="8.2" y="18" width="4.7" height="5.5" fill="#000"/><rect x="14.2" y="6" width="2.5" height="5.5" fill="#000"/></svg>
<div class="t" style="left:38.00px;top:397.51px;font-size:15.7px;line-height:15.7px;color:#5a5a5a;">Building</div>
<div class="t" style="left:195.00px;top:397.51px;font-size:15.7px;line-height:15.7px;color:#3a3a3a;">MV_Fischerfeuer</div>
<div class="t" style="left:662.00px;top:397.17px;font-size:16.1px;line-height:16.1px;color:#505050;">Modified</div>
<div class="t" style="left:1022.00px;top:397.51px;font-size:15.7px;line-height:15.7px;color:#505050;">mick1960</div>
<div class="t" style="left:1200.00px;top:397.51px;font-size:15.7px;line-height:15.7px;color:#505050;">&lt;kuid:206616:100716&gt;</div>
<div class="t" style="left:1454.00px;top:397.51px;font-size:15.7px;line-height:15.7px;color:#505050;">44.2MB</div>
<div class="t" style="left:1575.00px;top:397.51px;font-size:15.7px;line-height:15.7px;color:#505050;">23-AUG-2024 13:15:32</div>
<div class="t" style="left:1775.00px;top:397.51px;font-size:15.7px;line-height:15.7px;color:#505050;">23-AUG-2024 13:00:45</div>
<div class="t" style="left:1975.00px;top:397.51px;font-size:15.7px;line-height:15.7px;color:#505050;">24-AUG-2024</div>
<div class="t" style="left:2175.00px;top:397.51px;font-size:15.7px;line-height:15.7px;color:#505050;">4.6</div>
<div class="b" style="left:0;top:420px;width:2455px;height:30px;background:#ffffff;"></div>
<svg class="b" style="left:9px;top:420px" width="21" height="26" viewBox="0 0 21 26"><path d="M1.1 14.2L10.1 6.7L19.1 14.2" fill="none" stroke="#000" stroke-width="2.3" stroke-linecap="round" stroke-linejoin="miter"/><path d="M3.3 12.3V23.1H17.3V12.3" fill="none" stroke="#000" stroke-width="1.9"/><rect x="8.2" y="18" width="4.7" height="5.5" fill="#000"/><rect x="14.2" y="6" width="2.5" height="5.5" fill="#000"/></svg>
<div class="t" style="left:38.00px;top:427.51px;font-size:15.7px;line-height:15.7px;color:#5a5a5a;">Building</div>
<div class="t" style="left:195.00px;top:427.51px;font-size:15.7px;line-height:15.7px;color:#3a3a3a;">MV_Wasserturm 2</div>
<div class="t" style="left:662.00px;top:427.17px;font-size:16.1px;line-height:16.1px;color:#505050;">Modified</div>
<div class="t" style="left:1022.00px;top:427.51px;font-size:15.7px;line-height:15.7px;color:#505050;">mick1960</div>
<div class="t" style="left:1200.00px;top:427.51px;font-size:15.7px;line-height:15.7px;color:#505050;">&lt;kuid:206616:100715&gt;</div>
<div class="t" style="left:1454.00px;top:427.51px;font-size:15.7px;line-height:15.7px;color:#505050;">44.3MB</div>
<div class="t" style="left:1575.00px;top:427.51px;font-size:15.7px;line-height:15.7px;color:#505050;">21-AUG-2024 18:10:36</div>
<div class="t" style="left:1775.00px;top:427.51px;font-size:15.7px;line-height:15.7px;color:#505050;">21-AUG-2024 18:04:52</div>
<div class="t" style="left:1975.00px;top:427.51px;font-size:15.7px;line-height:15.7px;color:#505050;">23-AUG-2024</div>
<div class="t" style="left:2175.00px;top:427.51px;font-size:15.7px;line-height:15.7px;color:#505050;">4.6</div>
<div class="b" style="left:0;top:450px;width:2455px;height:30px;background:#f7f7f7;"></div>
<svg class="b" style="left:9px;top:450px" width="21" height="26" viewBox="0 0 21 26"><path d="M1.1 14.2L10.1 6.7L19.1 14.2" fill="none" stroke="#000" stroke-width="2.3" stroke-linecap="round" stroke-linejoin="miter"/><path d="M3.3 12.3V23.1H17.3V12.3" fill="none" stroke="#000" stroke-width="1.9"/><rect x="8.2" y="18" width="4.7" height="5.5" fill="#000"/><rect x="14.2" y="6" width="2.5" height="5.5" fill="#000"/></svg>
<div class="t" style="left:38.00px;top:457.51px;font-size:15.7px;line-height:15.7px;color:#9a9a9a;">Building</div>
<div class="t" style="left:195.00px;top:457.51px;font-size:15.7px;line-height:15.7px;color:#5a5a5a;">MV_Wasserturm 3</div>
<div class="t" style="left:662.00px;top:457.17px;font-size:16.1px;line-height:16.1px;color:#9a9a9a;">Modified, Obsolete</div>
<div class="t" style="left:1022.00px;top:457.51px;font-size:15.7px;line-height:15.7px;color:#9a9a9a;">mick1960</div>
<div class="t" style="left:1200.00px;top:457.51px;font-size:15.7px;line-height:15.7px;color:#9a9a9a;">&lt;kuid:206616:100714&gt;</div>
<div class="t" style="left:1454.00px;top:457.51px;font-size:15.7px;line-height:15.7px;color:#9a9a9a;">44.4MB</div>
<div class="t" style="left:1575.00px;top:457.51px;font-size:15.7px;line-height:15.7px;color:#9a9a9a;">20-AUG-2024 17:14:12</div>
<div class="t" style="left:1775.00px;top:457.51px;font-size:15.7px;line-height:15.7px;color:#9a9a9a;">20-AUG-2024 17:10:00</div>
<div class="t" style="left:1975.00px;top:457.51px;font-size:15.7px;line-height:15.7px;color:#9a9a9a;">22-AUG-2024</div>
<div class="t" style="left:2175.00px;top:457.51px;font-size:15.7px;line-height:15.7px;color:#9a9a9a;">4.6</div>
<div class="b" style="left:0;top:480px;width:2455px;height:30px;background:#ffffff;"></div>
<svg class="b" style="left:9px;top:480px" width="21" height="26" viewBox="0 0 21 26"><path d="M1.1 14.2L10.1 6.7L19.1 14.2" fill="none" stroke="#000" stroke-width="2.3" stroke-linecap="round" stroke-linejoin="miter"/><path d="M3.3 12.3V23.1H17.3V12.3" fill="none" stroke="#000" stroke-width="1.9"/><rect x="8.2" y="18" width="4.7" height="5.5" fill="#000"/><rect x="14.2" y="6" width="2.5" height="5.5" fill="#000"/></svg>
<div class="t" style="left:38.00px;top:487.51px;font-size:15.7px;line-height:15.7px;color:#5a5a5a;">Building</div>
<div class="t" style="left:195.00px;top:487.51px;font-size:15.7px;line-height:15.7px;color:#3a3a3a;">MV_Kuhstall Vorwerk HT</div>
<div class="t" style="left:662.00px;top:487.17px;font-size:16.1px;line-height:16.1px;color:#505050;">Modified</div>
<div class="t" style="left:1022.00px;top:487.51px;font-size:15.7px;line-height:15.7px;color:#505050;">mick1960</div>
<div class="t" style="left:1200.00px;top:487.51px;font-size:15.7px;line-height:15.7px;color:#505050;">&lt;kuid:206616:100713&gt;</div>
<div class="t" style="left:1454.00px;top:487.51px;font-size:15.7px;line-height:15.7px;color:#505050;">44.5MB</div>
<div class="t" style="left:1575.00px;top:487.51px;font-size:15.7px;line-height:15.7px;color:#505050;">15-AUG-2024 14:35:23</div>
<div class="t" style="left:1775.00px;top:487.51px;font-size:15.7px;line-height:15.7px;color:#505050;">15-AUG-2024 14:31:20</div>
<div class="t" style="left:1975.00px;top:487.51px;font-size:15.7px;line-height:15.7px;color:#505050;">17-AUG-2024</div>
<div class="t" style="left:2175.00px;top:487.51px;font-size:15.7px;line-height:15.7px;color:#505050;">4.6</div>
<div class="b" style="left:0;top:510px;width:2455px;height:30px;background:#f7f7f7;"></div>
<svg class="b" style="left:9px;top:510px" width="21" height="26" viewBox="0 0 21 26"><path d="M1.1 14.2L10.1 6.7L19.1 14.2" fill="none" stroke="#000" stroke-width="2.3" stroke-linecap="round" stroke-linejoin="miter"/><path d="M3.3 12.3V23.1H17.3V12.3" fill="none" stroke="#000" stroke-width="1.9"/><rect x="8.2" y="18" width="4.7" height="5.5" fill="#000"/><rect x="14.2" y="6" width="2.5" height="5.5" fill="#000"/></svg>
<div class="t" style="left:38.00px;top:517.51px;font-size:15.7px;line-height:15.7px;color:#5a5a5a;">Building</div>
<div class="t" style="left:195.00px;top:517.51px;font-size:15.7px;line-height:15.7px;color:#3a3a3a;">MV_Schafstall Vorwerk</div>
<div class="t" style="left:662.00px;top:517.17px;font-size:16.1px;line-height:16.1px;color:#505050;">Modified</div>
<div class="t" style="left:1022.00px;top:517.51px;font-size:15.7px;line-height:15.7px;color:#505050;">mick1960</div>
<div class="t" style="left:1200.00px;top:517.51px;font-size:15.7px;line-height:15.7px;color:#505050;">&lt;kuid:206616:100712&gt;</div>
<div class="t" style="left:1454.00px;top:517.51px;font-size:15.7px;line-height:15.7px;color:#505050;">44.6MB</div>
<div class="t" style="left:1575.00px;top:517.51px;font-size:15.7px;line-height:15.7px;color:#505050;">14-AUG-2024 17:15:15</div>
<div class="t" style="left:1775.00px;top:517.51px;font-size:15.7px;line-height:15.7px;color:#505050;">14-AUG-2024 17:10:09</div>
<div class="t" style="left:1975.00px;top:517.51px;font-size:15.7px;line-height:15.7px;color:#505050;">16-AUG-2024</div>
<div class="t" style="left:2175.00px;top:517.51px;font-size:15.7px;line-height:15.7px;color:#505050;">4.6</div>
<div class="b" style="left:0;top:540px;width:2455px;height:30px;background:#ffffff;"></div>
<svg class="b" style="left:9px;top:540px" width="21" height="26" viewBox="0 0 21 26"><path d="M1.1 14.2L10.1 6.7L19.1 14.2" fill="none" stroke="#000" stroke-width="2.3" stroke-linecap="round" stroke-linejoin="miter"/><path d="M3.3 12.3V23.1H17.3V12.3" fill="none" stroke="#000" stroke-width="1.9"/><rect x="8.2" y="18" width="4.7" height="5.5" fill="#000"/><rect x="14.2" y="6" width="2.5" height="5.5" fill="#000"/></svg>
<div class="t" style="left:38.00px;top:547.51px;font-size:15.7px;line-height:15.7px;color:#5a5a5a;">Building</div>
<div class="t" style="left:195.00px;top:547.51px;font-size:15.7px;line-height:15.7px;color:#3a3a3a;">MV_Scheune klein Vorwerk HT</div>
<div class="t" style="left:662.00px;top:547.17px;font-size:16.1px;line-height:16.1px;color:#505050;">Modified</div>
<div class="t" style="left:1022.00px;top:547.51px;font-size:15.7px;line-height:15.7px;color:#505050;">mick1960</div>
<div class="t" style="left:1200.00px;top:547.51px;font-size:15.7px;line-height:15.7px;color:#505050;">&lt;kuid:206616:100711&gt;</div>
<div class="t" style="left:1454.00px;top:547.51px;font-size:15.7px;line-height:15.7px;color:#505050;">44.7MB</div>
<div class="t" style="left:1575.00px;top:547.51px;font-size:15.7px;line-height:15.7px;color:#505050;">13-AUG-2024 17:50:37</div>
<div class="t" style="left:1775.00px;top:547.51px;font-size:15.7px;line-height:15.7px;color:#505050;">13-AUG-2024 17:42:28</div>
<div class="t" style="left:1975.00px;top:547.51px;font-size:15.7px;line-height:15.7px;color:#505050;">15-AUG-2024</div>
<div class="t" style="left:2175.00px;top:547.51px;font-size:15.7px;line-height:15.7px;color:#505050;">4.6</div>
<div class="b" style="left:0;top:570px;width:2455px;height:30px;background:#f7f7f7;"></div>
<svg class="b" style="left:9px;top:570px" width="21" height="26" viewBox="0 0 21 26"><path d="M10.1 5C6.1 5 3 8 3 12C3 16.3 10.1 24.8 10.1 24.8C10.1 24.8 17.2 16.3 17.2 12C17.2 8 14.1 5 10.1 5Z" fill="#000"/><circle cx="10.1" cy="12" r="3.3" fill="#f7f7f7"/></svg>
<div class="t" style="left:38.00px;top:577.51px;font-size:15.7px;line-height:15.7px;color:#5a5a5a;">Route</div>
<div class="t" style="left:195.00px;top:577.51px;font-size:15.7px;line-height:15.7px;color:#3a3a3a;">000Vorwerk</div>
<div class="t" style="left:662.00px;top:577.17px;font-size:16.1px;line-height:16.1px;color:#505050;">Modified</div>
<div class="t" style="left:1022.00px;top:577.51px;font-size:15.7px;line-height:15.7px;color:#505050;">mick1960</div>
<div class="t" style="left:1200.00px;top:577.51px;font-size:15.7px;line-height:15.7px;color:#505050;">&lt;kuid:206616:100710&gt;</div>
<div class="t" style="left:1454.00px;top:577.51px;font-size:15.7px;line-height:15.7px;color:#505050;">44.8MB</div>
<div class="t" style="left:1569.00px;top:577.51px;font-size:15.7px;line-height:15.7px;color:#505050;">12-AUG-2024 11:03:14</div>
<div class="t" style="left:1775.00px;top:577.51px;font-size:15.7px;line-height:15.7px;color:#505050;">12-AUG-2024 11:03:01</div>
<div class="t" style="left:1975.00px;top:577.51px;font-size:15.7px;line-height:15.7px;color:#505050;">-</div>
<div class="t" style="left:2175.00px;top:577.51px;font-size:15.7px;line-height:15.7px;color:#505050;">5.0</div>
<div class="b" style="left:0;top:600px;width:2455px;height:30px;background:#ffffff;"></div>
<svg class="b" style="left:9px;top:600px" width="21" height="26" viewBox="0 0 21 26"><rect x="2.6" y="4.4" width="15.2" height="5.6" rx="2.8" fill="none" stroke="#000" stroke-width="1.7"/><path d="M7.5 10.5V17.5M12.8 10.5V17.5" stroke="#000" stroke-width="1.7"/><path d="M1.8 21L3.6 13.6Q3.9 12.9 4.8 12.9H15.6Q16.5 12.9 16.8 13.6L18.6 21" fill="none" stroke="#000" stroke-width="1.7"/><rect x="1.3" y="21" width="17.6" height="4.2" rx="1.4" fill="none" stroke="#000" stroke-width="1.7"/></svg>
<div class="t" style="left:38.00px;top:607.51px;font-size:15.7px;line-height:15.7px;color:#5a5a5a;">Session</div>
<div class="t" style="left:195.00px;top:607.51px;font-size:15.7px;line-height:15.7px;color:#3a3a3a;">000Vorwerk - Default</div>
<div class="t" style="left:662.00px;top:607.17px;font-size:16.1px;line-height:16.1px;color:#505050;">Modified</div>
<div class="t" style="left:1022.00px;top:607.51px;font-size:15.7px;line-height:15.7px;color:#505050;">mick1960</div>
<div class="t" style="left:1200.00px;top:607.51px;font-size:15.7px;line-height:15.7px;color:#505050;">&lt;kuid:206616:100709&gt;</div>
<div class="t" style="left:1454.00px;top:607.51px;font-size:15.7px;line-height:15.7px;color:#505050;">44.9MB</div>
<div class="t" style="left:1569.00px;top:607.51px;font-size:15.7px;line-height:15.7px;color:#505050;">12-AUG-2024 11:03:14</div>
<div class="t" style="left:1775.00px;top:607.51px;font-size:15.7px;line-height:15.7px;color:#505050;">12-AUG-2024 11:03:01</div>
<div class="t" style="left:1975.00px;top:607.51px;font-size:15.7px;line-height:15.7px;color:#505050;">-</div>
<div class="t" style="left:2175.00px;top:607.51px;font-size:15.7px;line-height:15.7px;color:#505050;">5.0</div>
<div class="b" style="left:0;top:630px;width:2455px;height:30px;background:#f7f7f7;"></div>
<svg class="b" style="left:9px;top:630px" width="21" height="26" viewBox="0 0 21 26"><path d="M1.1 14.2L10.1 6.7L19.1 14.2" fill="none" stroke="#000" stroke-width="2.3" stroke-linecap="round" stroke-linejoin="miter"/><path d="M3.3 12.3V23.1H17.3V12.3" fill="none" stroke="#000" stroke-width="1.9"/><rect x="8.2" y="18" width="4.7" height="5.5" fill="#000"/><rect x="14.2" y="6" width="2.5" height="5.5" fill="#000"/></svg>
<div class="t" style="left:38.00px;top:637.51px;font-size:15.7px;line-height:15.7px;color:#5a5a5a;">Building</div>
<div class="t" style="left:195.00px;top:637.51px;font-size:15.7px;line-height:15.7px;color:#3a3a3a;">MV_Schablone Vorwerk</div>
<div class="t" style="left:662.00px;top:637.17px;font-size:16.1px;line-height:16.1px;color:#505050;">Modified</div>
<div class="t" style="left:1022.00px;top:637.51px;font-size:15.7px;line-height:15.7px;color:#505050;">mick1960</div>
<div class="t" style="left:1200.00px;top:637.51px;font-size:15.7px;line-height:15.7px;color:#505050;">&lt;kuid:206616:100708&gt;</div>
<div class="t" style="left:1454.00px;top:637.51px;font-size:15.7px;line-height:15.7px;color:#505050;">45.0MB</div>
<div class="t" style="left:1575.00px;top:637.51px;font-size:15.7px;line-height:15.7px;color:#505050;">12-AUG-2024 10:51:30</div>
<div class="t" style="left:1775.00px;top:637.51px;font-size:15.7px;line-height:15.7px;color:#505050;">12-AUG-2024 10:51:19</div>
<div class="t" style="left:1975.00px;top:637.51px;font-size:15.7px;line-height:15.7px;color:#505050;">-</div>
<div class="t" style="left:2175.00px;top:637.51px;font-size:15.7px;line-height:15.7px;color:#505050;">4.6</div>
<div class="b" style="left:0;top:660px;width:2455px;height:30px;background:#ffffff;"></div>
<svg class="b" style="left:9px;top:660px" width="21" height="26" viewBox="0 0 21 26"><path d="M1.1 14.2L10.1 6.7L19.1 14.2" fill="none" stroke="#000" stroke-width="2.3" stroke-linecap="round" stroke-linejoin="miter"/><path d="M3.3 12.3V23.1H17.3V12.3" fill="none" stroke="#000" stroke-width="1.9"/><rect x="8.2" y="18" width="4.7" height="5.5" fill="#000"/><rect x="14.2" y="6" width="2.5" height="5.5" fill="#000"/></svg>
<div class="t" style="left:38.00px;top:667.51px;font-size:15.7px;line-height:15.7px;color:#5a5a5a;">Building</div>
<div class="t" style="left:195.00px;top:667.51px;font-size:15.7px;line-height:15.7px;color:#3a3a3a;">MV_Scheune Vorwerk HT</div>
<div class="t" style="left:662.00px;top:667.17px;font-size:16.1px;line-height:16.1px;color:#505050;">Modified</div>
<div class="t" style="left:1022.00px;top:667.51px;font-size:15.7px;line-height:15.7px;color:#505050;">mick1960</div>
<div class="t" style="left:1200.00px;top:667.51px;font-size:15.7px;line-height:15.7px;color:#505050;">&lt;kuid:206616:100707&gt;</div>
<div class="t" style="left:1454.00px;top:667.51px;font-size:15.7px;line-height:15.7px;color:#505050;">45.1MB</div>
<div class="t" style="left:1575.00px;top:667.51px;font-size:15.7px;line-height:15.7px;color:#505050;">11-AUG-2024 17:06:12</div>
<div class="t" style="left:1775.00px;top:667.51px;font-size:15.7px;line-height:15.7px;color:#505050;">11-AUG-2024 17:04:32</div>
<div class="t" style="left:1975.00px;top:667.51px;font-size:15.7px;line-height:15.7px;color:#505050;">13-AUG-2024</div>
<div class="t" style="left:2175.00px;top:667.51px;font-size:15.7px;line-height:15.7px;color:#505050;">4.6</div>
<div class="b" style="left:0;top:690px;width:2455px;height:30px;background:#f7f7f7;"></div>
<svg class="b" style="left:9px;top:690px" width="21" height="26" viewBox="0 0 21 26"><path d="M1.1 14.2L10.1 6.7L19.1 14.2" fill="none" stroke="#000" stroke-width="2.3" stroke-linecap="round" stroke-linejoin="miter"/><path d="M3.3 12.3V23.1H17.3V12.3" fill="none" stroke="#000" stroke-width="1.9"/><rect x="8.2" y="18" width="4.7" height="5.5" fill="#000"/><rect x="14.2" y="6" width="2.5" height="5.5" fill="#000"/></svg>
<div class="t" style="left:38.00px;top:697.51px;font-size:15.7px;line-height:15.7px;color:#5a5a5a;">Building</div>
<div class="t" style="left:195.00px;top:697.51px;font-size:15.7px;line-height:15.7px;color:#3a3a3a;">MV_Pferdestall Vorwerk HT</div>
<div class="t" style="left:662.00px;top:697.17px;font-size:16.1px;line-height:16.1px;color:#505050;">Modified</div>
<div class="t" style="left:1022.00px;top:697.51px;font-size:15.7px;line-height:15.7px;color:#505050;">mick1960</div>
<div class="t" style="left:1200.00px;top:697.51px;font-size:15.7px;line-height:15.7px;color:#505050;">&lt;kuid:206616:100706&gt;</div>
<div class="t" style="left:1454.00px;top:697.51px;font-size:15.7px;line-height:15.7px;color:#505050;">45.2MB</div>
<div class="t" style="left:1575.00px;top:697.51px;font-size:15.7px;line-height:15.7px;color:#505050;">10-AUG-2024 16:00:48</div>
<div class="t" style="left:1775.00px;top:697.51px;font-size:15.7px;line-height:15.7px;color:#505050;">10-AUG-2024 15:55:31</div>
<div class="t" style="left:1975.00px;top:697.51px;font-size:15.7px;line-height:15.7px;color:#505050;">12-AUG-2024</div>
<div class="t" style="left:2175.00px;top:697.51px;font-size:15.7px;line-height:15.7px;color:#505050;">4.6</div>
<div class="b" style="left:0;top:720px;width:2455px;height:30px;background:#ffffff;"></div>
<svg class="b" style="left:9px;top:720px" width="21" height="26" viewBox="0 0 21 26"><path d="M1.1 14.2L10.1 6.7L19.1 14.2" fill="none" stroke="#000" stroke-width="2.3" stroke-linecap="round" stroke-linejoin="miter"/><path d="M3.3 12.3V23.1H17.3V12.3" fill="none" stroke="#000" stroke-width="1.9"/><rect x="8.2" y="18" width="4.7" height="5.5" fill="#000"/><rect x="14.2" y="6" width="2.5" height="5.5" fill="#000"/></svg>
<div class="t" style="left:38.00px;top:727.51px;font-size:15.7px;line-height:15.7px;color:#5a5a5a;">Building</div>
<div class="t" style="left:195.00px;top:727.51px;font-size:15.7px;line-height:15.7px;color:#3a3a3a;">MV_Stall</div>
<div class="t" style="left:662.00px;top:727.17px;font-size:16.1px;line-height:16.1px;color:#505050;">Modified</div>
<div class="t" style="left:1022.00px;top:727.51px;font-size:15.7px;line-height:15.7px;color:#505050;">mick1960</div>
<div class="t" style="left:1200.00px;top:727.51px;font-size:15.7px;line-height:15.7px;color:#505050;"></div>
<div class="t" style="left:1454.00px;top:727.51px;font-size:15.7px;line-height:15.7px;color:#505050;"></div>
<div class="t" style="left:1575.00px;top:727.51px;font-size:15.7px;line-height:15.7px;color:#505050;"></div>
<div class="t" style="left:1775.00px;top:727.51px;font-size:15.7px;line-height:15.7px;color:#505050;"></div>
<div class="t" style="left:1975.00px;top:727.51px;font-size:15.7px;line-height:15.7px;color:#505050;"></div>
<div class="t" style="left:2175.00px;top:727.51px;font-size:15.7px;line-height:15.7px;color:#505050;"></div>
</div>
<div class="b" style="left:2461px;top:146px;width:16px;height:729px;background-color:#f0f0f0;background-image:repeating-conic-gradient(#d4d0c8 0 25%, #ffffff 0 50%);background-size:2px 2px;"></div>
<div class="b" style="left:2461px;top:147px;width:16px;height:22px;background:#d4d0c8;border-top:1px solid #fff;border-left:1px solid #fff;border-right:1px solid #404040;border-bottom:1px solid #404040;box-sizing:border-box;"></div>
<div class="b" style="left:2461px;top:169px;width:16px;height:25px;background:#d4d0c8;border-top:1px solid #fff;border-left:1px solid #fff;border-right:1px solid #404040;border-bottom:1px solid #404040;box-sizing:border-box;"></div>
<div class="b" style="left:2461px;top:852px;width:16px;height:23px;background:#d4d0c8;border-top:1px solid #fff;border-left:1px solid #fff;border-right:1px solid #404040;border-bottom:1px solid #404040;box-sizing:border-box;"></div>
<svg class="b" style="left:2465px;top:155px" width="9" height="5" viewBox="0 0 9 5"><path d="M0 5H9L4.5 0Z" fill="#000"/></svg>
<svg class="b" style="left:2465px;top:861px" width="9" height="5" viewBox="0 0 9 5"><path d="M0 0H9L4.5 5Z" fill="#000"/></svg>
<div class="b" style="left:735px;top:511px;width:980px;height:761px;background:#ffffff;"></div>
<div class="b" style="left:735px;top:511px;width:980px;height:1px;background:#c8c8c8;"></div>
<div class="b" style="left:735px;top:511px;width:1px;height:761px;background:#c8c8c8;"></div>
<div class="b" style="left:736px;top:512px;width:979px;height:1px;background:#f4f4fa;"></div>
<div class="b" style="left:739px;top:513px;width:976px;height:1px;background:#d8d8f8;"></div>
<div class="b" style="left:737px;top:513px;width:1px;height:759px;background:#d4d0c8;"></div>
<div class="b" style="left:739px;top:514px;width:976px;height:35px;background:#000080;"></div>
<svg class="b" style="left:745px;top:518px" width="18" height="25" viewBox="0 0 18 25"><defs><linearGradient id="flt" x1="0" y1="0" x2="0" y2="1"><stop offset="0" stop-color="#fffce0"/><stop offset="1" stop-color="#f0e090"/></linearGradient><linearGradient id="frt" x1="0" y1="0" x2="1" y2="1"><stop offset="0" stop-color="#f8f0b8"/><stop offset="1" stop-color="#e2c048"/></linearGradient></defs><path d="M7 2.2L16.2 3.2V15L17.4 17.2V21.4L7 22.8Z" fill="url(#frt)"/><path d="M0.8 0.8L7 2.2V24.6L0.8 19.6Z" fill="url(#flt)"/></svg>
<div class="t" style="left:776.00px;top:523.29px;font-size:18.8px;line-height:18.8px;color:#fff;font-weight:700;">F:\Program Files\N3V Games\Trainz Railroad Simulator 2019\userdata\editing\kuid 206616 100728 M</div>
<div class="b" style="left:739px;top:549px;width:976px;height:1px;background:#b0b0e8;"></div>
<div class="b" style="left:739px;top:550px;width:976px;height:132px;background:#d4d0c8;"></div>
<div class="b" style="left:740px;top:551px;width:975px;height:1px;background:#ffffff;"></div>
<div class="b" style="left:740px;top:551px;width:1px;height:33px;background:#ffffff;"></div>
<div class="b" style="left:740px;top:584px;width:975px;height:1px;background:#808080;"></div>
<div class="b" style="left:740px;top:585px;width:975px;height:1px;background:#ffffff;"></div>
<svg class="b" style="left:742px;top:554px" width="58" height="29" viewBox="0 0 58 29"><defs><radialGradient id="bg1" cx="0.45" cy="0.35" r="0.7"><stop offset="0" stop-color="#fbfbfb"/><stop offset="1" stop-color="#c8c8c8"/></radialGradient></defs><rect x="12" y="5" width="30" height="18" fill="#b8b8b8"/><circle cx="14" cy="14.5" r="12" fill="url(#bg1)" stroke="#8a8a8a" stroke-width="1.2"/><circle cx="42.5" cy="14.5" r="12" fill="url(#bg1)" stroke="#8a8a8a" stroke-width="1.2"/><path d="M8 14.5H20M8 14.5L13 9.5M8 14.5L13 19.5" stroke="#e4e4e4" stroke-width="2.2" fill="none"/><path d="M36 14.5H48M48 14.5L43 9.5M48 14.5L43 19.5" stroke="#e4e4e4" stroke-width="2.2" fill="none"/></svg>
<div class="b" style="left:813px;top:553px;width:902px;height:30px;background:#d4d0c8;border-left:1px solid #808080;border-top:1px solid #808080;border-bottom:1px solid #fff;box-sizing:border-box;"></div>
<svg class="b" style="left:815px;top:554px" width="17" height="23" viewBox="0 0 18 25"><defs><linearGradient id="fla" x1="0" y1="0" x2="0" y2="1"><stop offset="0" stop-color="#fffce0"/><stop offset="1" stop-color="#f0e090"/></linearGradient><linearGradient id="fra" x1="0" y1="0" x2="1" y2="1"><stop offset="0" stop-color="#f8f0b8"/><stop offset="1" stop-color="#e2c048"/></linearGradient></defs><path d="M7 2.2L16.2 3.2V15L17.4 17.2V21.4L7 22.8Z" fill="url(#fra)"/><path d="M0.8 0.8L7 2.2V24.6L0.8 19.6Z" fill="url(#fla)"/></svg>
<svg class="b" style="left:846px;top:563px" width="11" height="6" viewBox="0 0 11 6"><path d="M0 0H11L5.5 6Z" fill="#000"/></svg>
<div class="t" style="left:865.00px;top:559.00px;font-size:16.3px;line-height:16.3px;color:#000;">Computer</div>
<svg class="b" style="left:944px;top:563px" width="11" height="6" viewBox="0 0 11 6"><path d="M0 0H11L5.5 6Z" fill="#000"/></svg>
<div class="t" style="left:962.50px;top:559.00px;font-size:16.3px;line-height:16.3px;color:#000;">D1-F (F:)</div>
<svg class="b" style="left:1038.5px;top:563px" width="11" height="6" viewBox="0 0 11 6"><path d="M0 0H11L5.5 6Z" fill="#000"/></svg>
<div class="t" style="left:1057.00px;top:559.00px;font-size:16.3px;line-height:16.3px;color:#000;">Program Files</div>
<svg class="b" style="left:1165px;top:563px" width="11" height="6" viewBox="0 0 11 6"><path d="M0 0H11L5.5 6Z" fill="#000"/></svg>
<div class="t" style="left:1183.00px;top:559.00px;font-size:16.3px;line-height:16.3px;color:#000;">N3V Games</div>
<svg class="b" style="left:1276px;top:563px" width="11" height="6" viewBox="0 0 11 6"><path d="M0 0H11L5.5 6Z" fill="#000"/></svg>
<div class="t" style="left:1294.50px;top:559.00px;font-size:16.3px;line-height:16.3px;color:#000;">Trainz Railroad Simulator 2019</div>
<svg class="b" style="left:1528px;top:563px" width="11" height="6" viewBox="0 0 11 6"><path d="M0 0H11L5.5 6Z" fill="#000"/></svg>
<div class="t" style="left:1547.00px;top:559.00px;font-size:16.3px;line-height:16.3px;color:#000;">userdata</div>
<svg class="b" style="left:1617px;top:563px" width="11" height="6" viewBox="0 0 11 6"><path d="M0 0H11L5.5 6Z" fill="#000"/></svg>
<div class="t" style="left:1636.00px;top:559.00px;font-size:16.3px;line-height:16.3px;color:#000;">editing</div>
<svg class="b" style="left:1694px;top:563px" width="11" height="6" viewBox="0 0 11 6"><path d="M0 0H11L5.5 6Z" fill="#000"/></svg>
<div class="b" style="left:1712px;top:561px;width:2px;height:13px;background:#000;"></div>
<div class="t" style="left:747.00px;top:591.53px;font-size:16.5px;line-height:16.5px;color:#000;">File</div>
<div class="t" style="left:789.00px;top:591.53px;font-size:16.5px;line-height:16.5px;color:#000;">Edit</div>
<div class="t" style="left:834.00px;top:591.53px;font-size:16.5px;line-height:16.5px;color:#000;">View</div>
<div class="t" style="left:886.40px;top:591.53px;font-size:16.5px;line-height:16.5px;color:#000;">Tools</div>
<div class="t" style="left:942.40px;top:591.53px;font-size:16.5px;line-height:16.5px;color:#000;">Help</div>
<div class="t" style="left:744.50px;top:616.06px;font-size:14.7px;line-height:14.7px;color:#1a2a8a;font-weight:700;">EPSON</div>
<div class="t" style="left:801.70px;top:614.53px;font-size:16.5px;line-height:16.5px;color:#000;">Easy Photo Print</div>
<svg class="b" style="left:931px;top:620px" width="11" height="6" viewBox="0 0 11 6"><path d="M0 0H11L5.5 6Z" fill="#000"/></svg>
<svg class="b" style="left:951px;top:615px" width="17" height="17" viewBox="0 0 17 17"><circle cx="8.2" cy="8.3" r="7.4" fill="#2f7f3f" stroke="#5aa86a" stroke-width="0.8"/><rect x="5.2" y="3.8" width="6" height="3" fill="none" stroke="#b8f8b8" stroke-width="1.1"/><rect x="3.6" y="6.6" width="9.2" height="4.6" fill="none" stroke="#b8f8b8" stroke-width="1.1"/><rect x="5.6" y="9.8" width="5.2" height="3" fill="#2f7f3f" stroke="#b8f8b8" stroke-width="1.1"/></svg>
<div class="t" style="left:971.80px;top:614.53px;font-size:16.5px;line-height:16.5px;color:#000;">Photo Print</div>
<div class="t" style="left:759.40px;top:648.73px;font-size:16.5px;line-height:16.5px;color:#000;">Organize</div>
<svg class="b" style="left:839px;top:654px" width="11" height="6" viewBox="0 0 11 6"><path d="M0 0H11L5.5 6Z" fill="#000"/></svg>
<svg class="b" style="left:876px;top:645px" width="22" height="22" viewBox="0 0 22 22"><rect x="1" y="2" width="20" height="19" fill="#b8b8c8" opacity="0.6"/><rect x="1.6" y="1.7" width="18.5" height="17.8" fill="#1c2a88"/><text x="10.8" y="14.2" font-family="Liberation Sans" font-weight="700" font-size="10.5" fill="#a8c0ff" text-anchor="middle">Ps</text></svg>
<div class="t" style="left:905.70px;top:648.73px;font-size:16.5px;line-height:16.5px;color:#000;">Open</div>
<div class="t" style="left:971.80px;top:648.73px;font-size:16.5px;line-height:16.5px;color:#000;">Burn</div>
<div class="t" style="left:1033.00px;top:648.73px;font-size:16.5px;line-height:16.5px;color:#000;">New folder</div>
<div class="b" style="left:739px;top:682px;width:976px;height:1px;background:#ffffff;"></div>
<div class="b" style="left:739px;top:683px;width:976px;height:35px;background:#d4d0c8;"></div>
<div class="b" style="left:739px;top:682px;width:1px;height:36px;background:#ffffff;"></div>
<div class="b" style="left:739px;top:718px;width:976px;height:1px;background:#404040;"></div>
<div class="b" style="left:739px;top:719px;width:976px;height:0.6px;background:#909090;"></div>
<div class="b" style="left:1180px;top:683px;width:1px;height:35px;background:#404040;"></div>
<div class="b" style="left:1181px;top:683px;width:1px;height:35px;background:#ffffff;"></div>
<div class="b" style="left:1375px;top:683px;width:1px;height:35px;background:#404040;"></div>
<div class="b" style="left:1376px;top:683px;width:1px;height:35px;background:#ffffff;"></div>
<div class="b" style="left:1570px;top:683px;width:1px;height:35px;background:#404040;"></div>
<div class="b" style="left:1571px;top:683px;width:1px;height:35px;background:#ffffff;"></div>
<div class="b" style="left:1700px;top:683px;width:1px;height:35px;background:#404040;"></div>
<div class="b" style="left:1701px;top:683px;width:1px;height:35px;background:#ffffff;"></div>
<div class="t" style="left:764.00px;top:693.45px;font-size:16.6px;line-height:16.6px;color:#000;">Name</div>
<div class="t" style="left:1189.50px;top:693.45px;font-size:16.6px;line-height:16.6px;color:#000;">Date modified</div>
<div class="t" style="left:1384.00px;top:693.45px;font-size:16.6px;line-height:16.6px;color:#000;">Type</div>
<div class="t" style="left:1578.50px;top:693.45px;font-size:16.6px;line-height:16.6px;color:#000;">Size</div>
<svg class="b" style="left:1427px;top:697px" width="9" height="5" viewBox="0 0 9 5"><path d="M0 5H9L4.5 0Z" fill="#a0a0a0"/></svg>
<div class="b" style="left:739px;top:719.5px;width:976px;height:553px;background:#ffffff;"></div>
<div class="b" style="left:762px;top:927px;width:933px;height:98px;background:#ffff00;"></div>
<div class="b" style="left:760px;top:1025px;width:935px;height:99px;background:#0a246a;"></div>
<svg class="b" style="left:767px;top:733px" width="22" height="24" viewBox="0 0 22 24"><path d="M0.6 0.6H15.5L21.4 6.5V23.4H0.6Z" fill="#fff" stroke="#1f6f6f" stroke-width="1.2"/><path d="M15.5 0.6V6.5H21.4Z" fill="#1f8f8f"/><path d="M5.5 16.5V7C5.5 4.2 7.3 2.5 10 2.5H13.5V6H10.2C9.6 6 9.3 6.3 9.3 7V8.3H13V11.6H9.3V16.5Z" fill="#1a9a9a"/><path d="M11.5 8.3H19V16.5H11.5Z" fill="#7fe0e0" opacity="0.55"/><rect x="0" y="17" width="22" height="7" fill="#176a6a"/><text x="11" y="23" font-family="Liberation Sans" font-weight="700" font-size="6.8" fill="#fff" text-anchor="middle" letter-spacing="0.3">FBX</text></svg>
<div class="t" style="left:795.00px;top:737.75px;font-size:16.6px;line-height:16.6px;color:#000;">lod0.fbx</div>
<div class="t" style="left:1189.00px;top:737.75px;font-size:16.6px;line-height:16.6px;color:#000;">08-Oct-24 12:29</div>
<div class="t" style="left:1384.00px;top:737.75px;font-size:16.6px;line-height:16.6px;color:#000;">FBX File</div>
<div class="t" style="right:791.00px;top:737.75px;font-size:16.6px;line-height:16.6px;color:#000;">443 KB</div>
<svg class="b" style="left:767px;top:766px" width="22" height="24" viewBox="0 0 22 24"><path d="M0.6 0.6H15.5L21.4 6.5V23.4H0.6Z" fill="#fff" stroke="#1f6f6f" stroke-width="1.2"/><path d="M15.5 0.6V6.5H21.4Z" fill="#1f8f8f"/><path d="M5.5 16.5V7C5.5 4.2 7.3 2.5 10 2.5H13.5V6H10.2C9.6 6 9.3 6.3 9.3 7V8.3H13V11.6H9.3V16.5Z" fill="#1a9a9a"/><path d="M11.5 8.3H19V16.5H11.5Z" fill="#7fe0e0" opacity="0.55"/><rect x="0" y="17" width="22" height="7" fill="#176a6a"/><text x="11" y="23" font-family="Liberation Sans" font-weight="700" font-size="6.8" fill="#fff" text-anchor="middle" letter-spacing="0.3">FBX</text></svg>
<div class="t" style="left:795.00px;top:770.75px;font-size:16.6px;line-height:16.6px;color:#000;">lod1.fbx</div>
<div class="t" style="left:1189.00px;top:770.75px;font-size:16.6px;line-height:16.6px;color:#000;">08-Oct-24 12:29</div>
<div class="t" style="left:1384.00px;top:770.75px;font-size:16.6px;line-height:16.6px;color:#000;">FBX File</div>
<div class="t" style="right:791.00px;top:770.75px;font-size:16.6px;line-height:16.6px;color:#000;">168 KB</div>
<svg class="b" style="left:767px;top:799px" width="22" height="24" viewBox="0 0 22 24"><path d="M0.6 0.6H15.5L21.4 6.5V23.4H0.6Z" fill="#fff" stroke="#1f6f6f" stroke-width="1.2"/><path d="M15.5 0.6V6.5H21.4Z" fill="#1f8f8f"/><path d="M5.5 16.5V7C5.5 4.2 7.3 2.5 10 2.5H13.5V6H10.2C9.6 6 9.3 6.3 9.3 7V8.3H13V11.6H9.3V16.5Z" fill="#1a9a9a"/><path d="M11.5 8.3H19V16.5H11.5Z" fill="#7fe0e0" opacity="0.55"/><rect x="0" y="17" width="22" height="7" fill="#176a6a"/><text x="11" y="23" font-family="Liberation Sans" font-weight="700" font-size="6.8" fill="#fff" text-anchor="middle" letter-spacing="0.3">FBX</text></svg>
<div class="t" style="left:795.00px;top:803.75px;font-size:16.6px;line-height:16.6px;color:#000;">lod2.fbx</div>
<div class="t" style="left:1189.00px;top:803.75px;font-size:16.6px;line-height:16.6px;color:#000;">08-Oct-24 12:29</div>
<div class="t" style="left:1384.00px;top:803.75px;font-size:16.6px;line-height:16.6px;color:#000;">FBX File</div>
<div class="t" style="right:791.00px;top:803.75px;font-size:16.6px;line-height:16.6px;color:#000;">128 KB</div>
<svg class="b" style="left:767px;top:832px" width="22" height="24" viewBox="0 0 22 24"><path d="M0.6 0.6H15.5L21.4 6.5V23.4H0.6Z" fill="#fff" stroke="#1f6f6f" stroke-width="1.2"/><path d="M15.5 0.6V6.5H21.4Z" fill="#1f8f8f"/><path d="M5.5 16.5V7C5.5 4.2 7.3 2.5 10 2.5H13.5V6H10.2C9.6 6 9.3 6.3 9.3 7V8.3H13V11.6H9.3V16.5Z" fill="#1a9a9a"/><path d="M11.5 8.3H19V16.5H11.5Z" fill="#7fe0e0" opacity="0.55"/><rect x="0" y="17" width="22" height="7" fill="#176a6a"/><text x="11" y="23" font-family="Liberation Sans" font-weight="700" font-size="6.8" fill="#fff" text-anchor="middle" letter-spacing="0.3">FBX</text></svg>
<div class="t" style="left:795.00px;top:836.75px;font-size:16.6px;line-height:16.6px;color:#000;">lod3.fbx</div>
<div class="t" style="left:1189.00px;top:836.75px;font-size:16.6px;line-height:16.6px;color:#000;">08-Oct-24 12:29</div>
<div class="t" style="left:1384.00px;top:836.75px;font-size:16.6px;line-height:16.6px;color:#000;">FBX File</div>
<div class="t" style="right:791.00px;top:836.75px;font-size:16.6px;line-height:16.6px;color:#000;">35 KB</div>
<svg class="b" style="left:768.5px;top:867px" width="18" height="21" viewBox="0 0 18 21"><path d="M0.5 0.5H13L17 4.5V20.5H0.5Z" fill="#fcfcfc" stroke="#b8b8b8"/><path d="M13 0.5V4.5H17" fill="#e8e8e8" stroke="#c8c8c8"/><rect x="3.6" y="3.5" width="10.4" height="10.8" fill="#1b2a6e"/><text x="8.8" y="11.6" font-family="Liberation Sans" font-weight="700" font-size="6.5" fill="#b0c8ff" text-anchor="middle">Ps</text><rect x="1" y="19" width="16" height="1.5" fill="#c8c8c8"/></svg>
<div class="t" style="left:795.00px;top:869.75px;font-size:16.6px;line-height:16.6px;color:#000;">thumbnail.jpg</div>
<div class="t" style="left:1189.00px;top:869.75px;font-size:16.6px;line-height:16.6px;color:#000;">08-Oct-24 12:29</div>
<div class="t" style="left:1384.00px;top:869.75px;font-size:16.6px;line-height:16.6px;color:#000;">JPG File</div>
<div class="t" style="right:791.00px;top:869.75px;font-size:16.6px;line-height:16.6px;color:#000;">56 KB</div>
<svg class="b" style="left:769px;top:900px" width="18" height="20" viewBox="0 0 18 20"><path d="M0.5 0.5H12.5L17 5V19.5H0.5Z" fill="#fafafa" stroke="#c0c0c0"/><path d="M2 1.5H11" stroke="#c0c0c0" stroke-dasharray="1.5 1"/><rect x="1.5" y="6" width="14.5" height="1.6" fill="#b4c0d0"/><rect x="1.5" y="9" width="14.5" height="1.6" fill="#b4c0d0"/><rect x="1.5" y="11.5" width="14.5" height="1.6" fill="#b4c0d0"/><rect x="1.5" y="14" width="14.5" height="1.6" fill="#b4c0d0"/><rect x="1.5" y="16.5" width="14.5" height="1.6" fill="#b4c0d0"/><rect x="0.5" y="18.5" width="16.5" height="1.5" fill="#c0c0c0"/></svg>
<div class="t" style="left:795.00px;top:902.75px;font-size:16.6px;line-height:16.6px;color:#000;">config.txt</div>
<div class="t" style="left:1189.00px;top:902.75px;font-size:16.6px;line-height:16.6px;color:#000;">08-Oct-24 12:29</div>
<div class="t" style="left:1384.00px;top:902.75px;font-size:16.6px;line-height:16.6px;color:#000;">Text Document</div>
<div class="t" style="right:791.00px;top:902.75px;font-size:16.6px;line-height:16.6px;color:#000;">3 KB</div>
<svg class="b" style="left:769px;top:934px" width="18" height="20" viewBox="0 0 18 20"><path d="M0.5 0.5H12.5L17 5V19.5H0.5Z" fill="#ffff60" stroke="#c8c040"/><path d="M2 1.5H11" stroke="#c8c040" stroke-dasharray="1.5 1"/><rect x="1.5" y="6" width="14.5" height="1.6" fill="#d8d040"/><rect x="1.5" y="9" width="14.5" height="1.6" fill="#d8d040"/><rect x="1.5" y="11.5" width="14.5" height="1.6" fill="#d8d040"/><rect x="1.5" y="14" width="14.5" height="1.6" fill="#d8d040"/><rect x="1.5" y="16.5" width="14.5" height="1.6" fill="#d8d040"/><rect x="0.5" y="18.5" width="16.5" height="1.5" fill="#c8c040"/></svg>
<div class="t" style="left:795.00px;top:935.75px;font-size:16.6px;line-height:16.6px;color:#000;">dach.texture.txt</div>
<div class="t" style="left:1189.00px;top:935.75px;font-size:16.6px;line-height:16.6px;color:#000;">08-Oct-24 12:29</div>
<div class="t" style="left:1384.00px;top:935.75px;font-size:16.6px;line-height:16.6px;color:#000;">Text Document</div>
<div class="t" style="right:791.00px;top:935.75px;font-size:16.6px;line-height:16.6px;color:#000;">1 KB</div>
<svg class="b" style="left:769px;top:966px" width="18" height="20" viewBox="0 0 18 20"><path d="M0.5 0.5H12.5L17 5V19.5H0.5Z" fill="#ffff60" stroke="#c8c040"/><path d="M2 1.5H11" stroke="#c8c040" stroke-dasharray="1.5 1"/><rect x="1.5" y="6" width="14.5" height="1.6" fill="#d8d040"/><rect x="1.5" y="9" width="14.5" height="1.6" fill="#d8d040"/><rect x="1.5" y="11.5" width="14.5" height="1.6" fill="#d8d040"/><rect x="1.5" y="14" width="14.5" height="1.6" fill="#d8d040"/><rect x="1.5" y="16.5" width="14.5" height="1.6" fill="#d8d040"/><rect x="0.5" y="18.5" width="16.5" height="1.5" fill="#c8c040"/></svg>
<div class="t" style="left:795.00px;top:968.75px;font-size:16.6px;line-height:16.6px;color:#000;">fenster.texture.txt</div>
<div class="t" style="left:1189.00px;top:968.75px;font-size:16.6px;line-height:16.6px;color:#000;">08-Oct-24 12:29</div>
<div class="t" style="left:1384.00px;top:968.75px;font-size:16.6px;line-height:16.6px;color:#000;">Text Document</div>
<div class="t" style="right:791.00px;top:968.75px;font-size:16.6px;line-height:16.6px;color:#000;">1 KB</div>
<svg class="b" style="left:769px;top:1000px" width="18" height="20" viewBox="0 0 18 20"><path d="M0.5 0.5H12.5L17 5V19.5H0.5Z" fill="#ffff60" stroke="#c8c040"/><path d="M2 1.5H11" stroke="#c8c040" stroke-dasharray="1.5 1"/><rect x="1.5" y="6" width="14.5" height="1.6" fill="#d8d040"/><rect x="1.5" y="9" width="14.5" height="1.6" fill="#d8d040"/><rect x="1.5" y="11.5" width="14.5" height="1.6" fill="#d8d040"/><rect x="1.5" y="14" width="14.5" height="1.6" fill="#d8d040"/><rect x="1.5" y="16.5" width="14.5" height="1.6" fill="#d8d040"/><rect x="0.5" y="18.5" width="16.5" height="1.5" fill="#c8c040"/></svg>
<div class="t" style="left:795.00px;top:1001.75px;font-size:16.6px;line-height:16.6px;color:#000;">waende.texture.txt</div>
<div class="t" style="left:1189.00px;top:1001.75px;font-size:16.6px;line-height:16.6px;color:#000;">08-Oct-24 12:29</div>
<div class="t" style="left:1384.00px;top:1001.75px;font-size:16.6px;line-height:16.6px;color:#000;">Text Document</div>
<div class="t" style="right:791.00px;top:1001.75px;font-size:16.6px;line-height:16.6px;color:#000;">1 KB</div>
<svg class="b" style="left:766px;top:1030px" width="23" height="22" viewBox="0 0 23 22"><path d="M6 0H17.5L22.3 4.8V21H6Z" fill="#fbfbff"/><path d="M17.5 0V4.8H22.3" fill="#d8d8e8"/><rect x="0" y="1" width="16" height="6.4" fill="#10208a"/><text x="8" y="6" font-family="Liberation Sans" font-weight="700" font-size="5" fill="#c8d0ff" text-anchor="middle">TARGA</text><rect x="9.2" y="11" width="5.4" height="5.4" fill="#d8d0b0" stroke="#6a6a5a" stroke-width="0.9"/><circle cx="18" cy="16" r="2.7" fill="#c8c0b0" stroke="#6a6a6a" stroke-width="0.9"/><path d="M14 12L17 9" stroke="#8a8a8a" stroke-width="1"/></svg>
<div class="t" style="left:795.00px;top:1034.75px;font-size:16.6px;line-height:16.6px;color:#fff;">dach.tga</div>
<div class="t" style="left:1189.00px;top:1034.75px;font-size:16.6px;line-height:16.6px;color:#fff;">08-Oct-24 12:29</div>
<div class="t" style="left:1384.00px;top:1034.75px;font-size:16.6px;line-height:16.6px;color:#fff;">TGA File</div>
<div class="t" style="right:791.00px;top:1034.75px;font-size:16.6px;line-height:16.6px;color:#fff;">12,289 KB</div>
<svg class="b" style="left:766px;top:1063px" width="23" height="22" viewBox="0 0 23 22"><path d="M6 0H17.5L22.3 4.8V21H6Z" fill="#fbfbff"/><path d="M17.5 0V4.8H22.3" fill="#d8d8e8"/><rect x="0" y="1" width="16" height="6.4" fill="#10208a"/><text x="8" y="6" font-family="Liberation Sans" font-weight="700" font-size="5" fill="#c8d0ff" text-anchor="middle">TARGA</text><rect x="9.2" y="11" width="5.4" height="5.4" fill="#d8d0b0" stroke="#6a6a5a" stroke-width="0.9"/><circle cx="18" cy="16" r="2.7" fill="#c8c0b0" stroke="#6a6a6a" stroke-width="0.9"/><path d="M14 12L17 9" stroke="#8a8a8a" stroke-width="1"/></svg>
<div class="t" style="left:795.00px;top:1067.75px;font-size:16.6px;line-height:16.6px;color:#fff;">fenster.tga</div>
<div class="t" style="left:1189.00px;top:1067.75px;font-size:16.6px;line-height:16.6px;color:#fff;">08-Oct-24 12:29</div>
<div class="t" style="left:1384.00px;top:1067.75px;font-size:16.6px;line-height:16.6px;color:#fff;">TGA File</div>
<div class="t" style="right:791.00px;top:1067.75px;font-size:16.6px;line-height:16.6px;color:#fff;">12,289 KB</div>
<svg class="b" style="left:766px;top:1096px" width="23" height="22" viewBox="0 0 23 22"><path d="M6 0H17.5L22.3 4.8V21H6Z" fill="#fbfbff"/><path d="M17.5 0V4.8H22.3" fill="#d8d8e8"/><rect x="0" y="1" width="16" height="6.4" fill="#10208a"/><text x="8" y="6" font-family="Liberation Sans" font-weight="700" font-size="5" fill="#c8d0ff" text-anchor="middle">TARGA</text><rect x="9.2" y="11" width="5.4" height="5.4" fill="#d8d0b0" stroke="#6a6a5a" stroke-width="0.9"/><circle cx="18" cy="16" r="2.7" fill="#c8c0b0" stroke="#6a6a6a" stroke-width="0.9"/><path d="M14 12L17 9" stroke="#8a8a8a" stroke-width="1"/></svg>
<div class="t" style="left:795.00px;top:1100.75px;font-size:16.6px;line-height:16.6px;color:#fff;">waende.tga</div>
<div class="t" style="left:1189.00px;top:1100.75px;font-size:16.6px;line-height:16.6px;color:#fff;">08-Oct-24 12:29</div>
<div class="t" style="left:1384.00px;top:1100.75px;font-size:16.6px;line-height:16.6px;color:#fff;">TGA File</div>
<div class="t" style="right:791.00px;top:1100.75px;font-size:16.6px;line-height:16.6px;color:#fff;">12,289 KB</div>
<svg class="b" style="left:769px;top:1131px" width="17" height="21" viewBox="0 0 17 21"><path d="M0.5 0.5H12.5L16.5 4.5V20.5H0.5Z" fill="#fcfcfc" stroke="#c0c0c0"/><path d="M12.5 0.5V4.5H16.5" fill="#e8e8e8" stroke="#c8c8c8"/><ellipse cx="8.5" cy="4" rx="3.5" ry="2.2" fill="#f0e060"/><rect x="4.8" y="4.5" width="8" height="9" fill="#181818"/><rect x="5.5" y="6" width="6.5" height="2" fill="#505050"/><rect x="4.2" y="9" width="8.4" height="3" fill="#8a8a30"/><rect x="5" y="13.5" width="2.2" height="1.8" fill="#101010"/><rect x="10.2" y="13.5" width="2.2" height="1.8" fill="#101010"/><rect x="0.5" y="19.3" width="16" height="1.2" fill="#c8c8c8"/></svg>
<div class="t" style="left:795.00px;top:1133.75px;font-size:16.6px;line-height:16.6px;color:#000;">lod0.trainzmesh</div>
<div class="t" style="left:1189.00px;top:1133.75px;font-size:16.6px;line-height:16.6px;color:#000;">08-Oct-24 12:29</div>
<div class="t" style="left:1384.00px;top:1133.75px;font-size:16.6px;line-height:16.6px;color:#000;">TRAINZMESH File</div>
<div class="t" style="right:791.00px;top:1133.75px;font-size:16.6px;line-height:16.6px;color:#000;">894 KB</div>
<svg class="b" style="left:769px;top:1164px" width="17" height="21" viewBox="0 0 17 21"><path d="M0.5 0.5H12.5L16.5 4.5V20.5H0.5Z" fill="#fcfcfc" stroke="#c0c0c0"/><path d="M12.5 0.5V4.5H16.5" fill="#e8e8e8" stroke="#c8c8c8"/><ellipse cx="8.5" cy="4" rx="3.5" ry="2.2" fill="#f0e060"/><rect x="4.8" y="4.5" width="8" height="9" fill="#181818"/><rect x="5.5" y="6" width="6.5" height="2" fill="#505050"/><rect x="4.2" y="9" width="8.4" height="3" fill="#8a8a30"/><rect x="5" y="13.5" width="2.2" height="1.8" fill="#101010"/><rect x="10.2" y="13.5" width="2.2" height="1.8" fill="#101010"/><rect x="0.5" y="19.3" width="16" height="1.2" fill="#c8c8c8"/></svg>
<div class="t" style="left:795.00px;top:1166.75px;font-size:16.6px;line-height:16.6px;color:#000;">lod1.trainzmesh</div>
<div class="t" style="left:1189.00px;top:1166.75px;font-size:16.6px;line-height:16.6px;color:#000;">08-Oct-24 12:29</div>
<div class="t" style="left:1384.00px;top:1166.75px;font-size:16.6px;line-height:16.6px;color:#000;">TRAINZMESH File</div>
<div class="t" style="right:791.00px;top:1166.75px;font-size:16.6px;line-height:16.6px;color:#000;">205 KB</div>
<svg class="b" style="left:769px;top:1197px" width="17" height="21" viewBox="0 0 17 21"><path d="M0.5 0.5H12.5L16.5 4.5V20.5H0.5Z" fill="#fcfcfc" stroke="#c0c0c0"/><path d="M12.5 0.5V4.5H16.5" fill="#e8e8e8" stroke="#c8c8c8"/><ellipse cx="8.5" cy="4" rx="3.5" ry="2.2" fill="#f0e060"/><rect x="4.8" y="4.5" width="8" height="9" fill="#181818"/><rect x="5.5" y="6" width="6.5" height="2" fill="#505050"/><rect x="4.2" y="9" width="8.4" height="3" fill="#8a8a30"/><rect x="5" y="13.5" width="2.2" height="1.8" fill="#101010"/><rect x="10.2" y="13.5" width="2.2" height="1.8" fill="#101010"/><rect x="0.5" y="19.3" width="16" height="1.2" fill="#c8c8c8"/></svg>
<div class="t" style="left:795.00px;top:1199.75px;font-size:16.6px;line-height:16.6px;color:#000;">lod2.trainzmesh</div>
<div class="t" style="left:1189.00px;top:1199.75px;font-size:16.6px;line-height:16.6px;color:#000;">08-Oct-24 12:29</div>
<div class="t" style="left:1384.00px;top:1199.75px;font-size:16.6px;line-height:16.6px;color:#000;">TRAINZMESH File</div>
<div class="t" style="right:791.00px;top:1199.75px;font-size:16.6px;line-height:16.6px;color:#000;">122 KB</div>
<svg class="b" style="left:769px;top:1230px" width="17" height="21" viewBox="0 0 17 21"><path d="M0.5 0.5H12.5L16.5 4.5V20.5H0.5Z" fill="#fcfcfc" stroke="#c0c0c0"/><path d="M12.5 0.5V4.5H16.5" fill="#e8e8e8" stroke="#c8c8c8"/><ellipse cx="8.5" cy="4" rx="3.5" ry="2.2" fill="#f0e060"/><rect x="4.8" y="4.5" width="8" height="9" fill="#181818"/><rect x="5.5" y="6" width="6.5" height="2" fill="#505050"/><rect x="4.2" y="9" width="8.4" height="3" fill="#8a8a30"/><rect x="5" y="13.5" width="2.2" height="1.8" fill="#101010"/><rect x="10.2" y="13.5" width="2.2" height="1.8" fill="#101010"/><rect x="0.5" y="19.3" width="16" height="1.2" fill="#c8c8c8"/></svg>
<div class="t" style="left:795.00px;top:1232.75px;font-size:16.6px;line-height:16.6px;color:#000;">lod3.trainzmesh</div>
<div class="t" style="left:1189.00px;top:1232.75px;font-size:16.6px;line-height:16.6px;color:#000;">08-Oct-24 12:29</div>
<div class="t" style="left:1384.00px;top:1232.75px;font-size:16.6px;line-height:16.6px;color:#000;">TRAINZMESH File</div>
<div class="t" style="right:791.00px;top:1232.75px;font-size:16.6px;line-height:16.6px;color:#000;">8 KB</div>
<div class="b" style="left:316px;top:157px;width:391px;height:524px;background:#d4d0c8;border-top:1px solid #e8e6e0;border-left:1px solid #e8e6e0;border-right:1px solid #404040;border-bottom:1px solid #404040;box-sizing:border-box;"></div>
<div class="t" style="left:344.00px;top:165.25px;font-size:16.6px;line-height:16.6px;color:#000;">Download</div>
<div class="t" style="left:344.00px;top:190.25px;font-size:16.6px;line-height:16.6px;color:#000;">Download this Version</div>
<div class="t" style="left:345.00px;top:216.25px;font-size:16.6px;line-height:16.6px;color:#ffffff;">Upload to DLS</div>
<div class="t" style="left:344.00px;top:215.25px;font-size:16.6px;line-height:16.6px;color:#8a8a8a;">Upload to DLS</div>
<div class="t" style="left:344.00px;top:240.25px;font-size:16.6px;line-height:16.6px;color:#000;">Export to CDP...</div>
<div class="b" style="left:320px;top:267px;width:383px;height:1px;background:#808080;"></div>
<div class="b" style="left:320px;top:268px;width:383px;height:1px;background:#ffffff;"></div>
<div class="t" style="left:344.00px;top:282.25px;font-size:16.6px;line-height:16.6px;color:#000;">Delete</div>
<div class="t" style="left:579.00px;top:282.25px;font-size:16.6px;line-height:16.6px;color:#000;">Ctrl+Delete</div>
<div class="b" style="left:320px;top:309px;width:383px;height:1px;background:#808080;"></div>
<div class="b" style="left:320px;top:310px;width:383px;height:1px;background:#ffffff;"></div>
<div class="b" style="left:319px;top:318px;width:383px;height:25px;background:#0a246a;"></div>
<div class="t" style="left:344.00px;top:324.25px;font-size:16.6px;line-height:16.6px;color:#fff;">Open...</div>
<svg class="b" style="left:689px;top:326px" width="6" height="11" viewBox="0 0 6 11"><path d="M0 0L6 5.5L0 11Z" fill="#fff"/></svg>
<div class="t" style="left:345.00px;top:350.25px;font-size:16.6px;line-height:16.6px;color:#ffffff;">Revert Unsubmitted Edits</div>
<div class="t" style="left:344.00px;top:349.25px;font-size:16.6px;line-height:16.6px;color:#8a8a8a;">Revert Unsubmitted Edits</div>
<div class="t" style="left:345.00px;top:375.25px;font-size:16.6px;line-height:16.6px;color:#ffffff;">Revert If Unchanged</div>
<div class="t" style="left:344.00px;top:374.25px;font-size:16.6px;line-height:16.6px;color:#8a8a8a;">Revert If Unchanged</div>
<div class="t" style="left:344.00px;top:399.25px;font-size:16.6px;line-height:16.6px;color:#000;">Revert To Original</div>
<div class="b" style="left:320px;top:426px;width:383px;height:1px;background:#808080;"></div>
<div class="b" style="left:320px;top:427px;width:383px;height:1px;background:#ffffff;"></div>
<div class="t" style="left:345.00px;top:442.25px;font-size:16.6px;line-height:16.6px;color:#ffffff;">Submit Edits</div>
<div class="t" style="left:344.00px;top:441.25px;font-size:16.6px;line-height:16.6px;color:#8a8a8a;">Submit Edits</div>
<div class="t" style="left:580.00px;top:442.25px;font-size:16.6px;line-height:16.6px;color:#ffffff;">Ctrl+Shift+E</div>
<div class="t" style="left:579.00px;top:441.25px;font-size:16.6px;line-height:16.6px;color:#8a8a8a;">Ctrl+Shift+E</div>
<div class="b" style="left:320px;top:468px;width:383px;height:1px;background:#808080;"></div>
<div class="b" style="left:320px;top:469px;width:383px;height:1px;background:#ffffff;"></div>
<div class="t" style="left:344.00px;top:483.25px;font-size:16.6px;line-height:16.6px;color:#000;">View Errors and Warnings</div>
<div class="t" style="left:344.00px;top:508.25px;font-size:16.6px;line-height:16.6px;color:#000;">List Dependencies</div>
<div class="t" style="left:344.00px;top:533.25px;font-size:16.6px;line-height:16.6px;color:#000;">List Dependencies Recursively</div>
<div class="t" style="left:344.00px;top:558.25px;font-size:16.6px;line-height:16.6px;color:#000;">List Dependants</div>
<div class="t" style="left:344.00px;top:583.25px;font-size:16.6px;line-height:16.6px;color:#000;">List Asset Versions</div>
<div class="t" style="left:344.00px;top:608.25px;font-size:16.6px;line-height:16.6px;color:#000;">List Assets In New Window</div>
<div class="t" style="left:579.00px;top:608.25px;font-size:16.6px;line-height:16.6px;color:#000;">Ctrl+Shift+O</div>
<div class="t" style="left:344.00px;top:633.25px;font-size:16.6px;line-height:16.6px;color:#000;">Add to Picklist</div>
<svg class="b" style="left:689px;top:635px" width="6" height="11" viewBox="0 0 6 11"><path d="M0 0L6 5.5L0 11Z" fill="#000"/></svg>
<div class="t" style="left:345.00px;top:659.25px;font-size:16.6px;line-height:16.6px;color:#ffffff;">Remove from Picklist</div>
<div class="t" style="left:344.00px;top:658.25px;font-size:16.6px;line-height:16.6px;color:#8a8a8a;">Remove from Picklist</div>
<div class="b" style="left:702px;top:317px;width:329px;height:179px;background:#d4d0c8;border-top:1px solid #e8e6e0;border-left:1px solid #e8e6e0;border-right:1px solid #404040;border-bottom:1px solid #404040;box-sizing:border-box;"></div>
<div class="t" style="left:729.00px;top:324.45px;font-size:16.6px;line-height:16.6px;color:#000;">Open for Editing</div>
<div class="b" style="left:704px;top:345px;width:325px;height:24px;background:#0a246a;"></div>
<div class="t" style="left:729.00px;top:349.45px;font-size:16.6px;line-height:16.6px;color:#fff;">Show In Explorer</div>
<div class="t" style="left:904.00px;top:349.45px;font-size:16.6px;line-height:16.6px;color:#fff;">Ctrl+E</div>
<div class="t" style="left:729.00px;top:374.45px;font-size:16.6px;line-height:16.6px;color:#000;">Edit Config File Text</div>
<div class="t" style="left:729.00px;top:399.45px;font-size:16.6px;line-height:16.6px;color:#000;">Edit Primary Script</div>
<div class="t" style="left:730.00px;top:425.45px;font-size:16.6px;line-height:16.6px;color:#ffffff;">Edit Asset In Surveyor</div>
<div class="t" style="left:729.00px;top:424.45px;font-size:16.6px;line-height:16.6px;color:#8a8a8a;">Edit Asset In Surveyor</div>
<div class="t" style="left:730.00px;top:450.45px;font-size:16.6px;line-height:16.6px;color:#ffffff;">Open Asset In Driver</div>
<div class="t" style="left:729.00px;top:449.45px;font-size:16.6px;line-height:16.6px;color:#8a8a8a;">Open Asset In Driver</div>
<div class="t" style="left:729.00px;top:474.45px;font-size:16.6px;line-height:16.6px;color:#000;">Preview Asset</div>
<div class="t" style="left:904.00px;top:474.45px;font-size:16.6px;line-height:16.6px;color:#000;">Ctrl+Shift+R</div>
<svg class="b" style="left:0;top:0;z-index:50" width="2481" height="1272" viewBox="0 0 2481 1272"><line x1="1003.5" y1="356.5" x2="1117" y2="512" stroke="#f4f430" stroke-width="3.2" stroke-linecap="round"/><path d="M1129 530L1110 517L1125 506Z" fill="#f4f430"/></svg>
</body></html>
